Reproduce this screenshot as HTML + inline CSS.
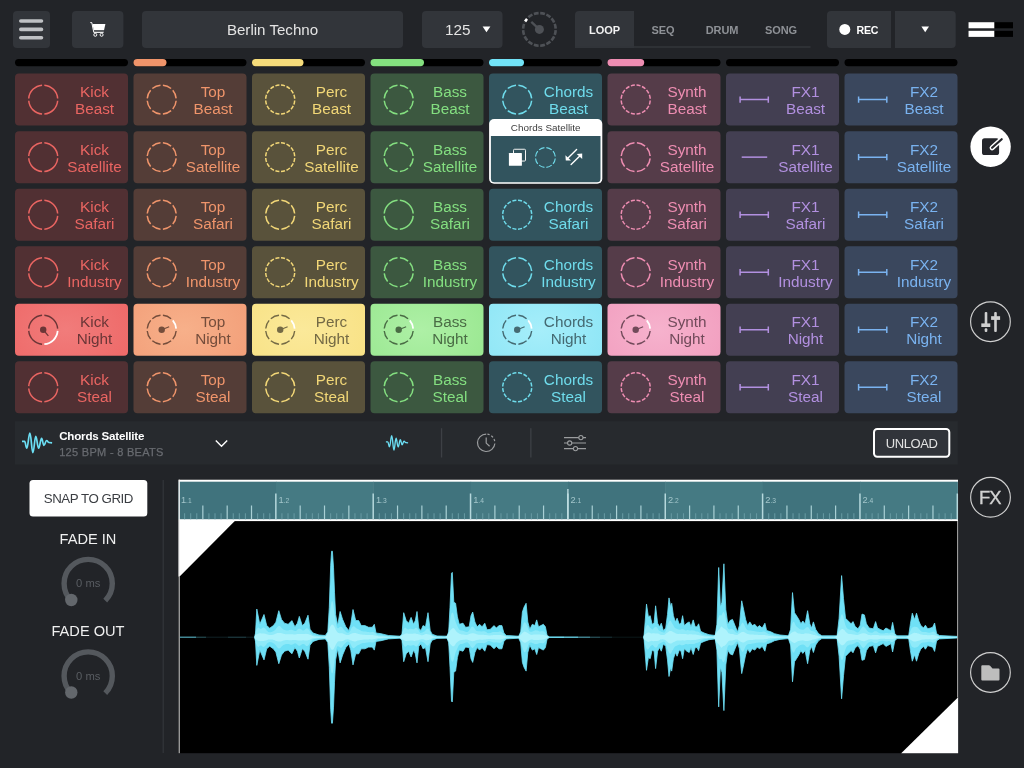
<!DOCTYPE html>
<html lang="en"><head><meta charset="utf-8"><title>Berlin Techno</title>
<style>
html,body{margin:0;padding:0}
body{width:1024px;height:768px;overflow:hidden;background:#222428;position:relative;
font-family:"Liberation Sans",sans-serif;color:#e6e6e6}
.a{position:absolute}
.cell{position:absolute;width:67px;text-align:center;font-size:15.3px;line-height:17px;white-space:nowrap}
.tab{position:absolute;top:11.8px;height:37px;line-height:37px;font-size:11px;font-weight:bold;color:#8e9196;text-align:center;letter-spacing:-.1px}
</style></head><body><div id="app" style="position:absolute;left:0;top:0;width:1024px;height:768px;will-change:transform">
<svg class="a" style="left:0;top:0" width="1024" height="768" viewBox="0 0 1024 768" font-family="Liberation Sans, sans-serif"><defs><radialGradient id="ga0" cx=".45" cy=".5" r=".62" gradientTransform="translate(.45 .5) scale(1 1.6) translate(-.45 -.5)"><stop offset="0" stop-color="#f17c7b"/><stop offset="1" stop-color="#ee6a69"/></radialGradient><radialGradient id="ga1" cx=".45" cy=".5" r=".62" gradientTransform="translate(.45 .5) scale(1 1.6) translate(-.45 -.5)"><stop offset="0" stop-color="#f7b08a"/><stop offset="1" stop-color="#f3a07a"/></radialGradient><radialGradient id="ga2" cx=".45" cy=".5" r=".62" gradientTransform="translate(.45 .5) scale(1 1.6) translate(-.45 -.5)"><stop offset="0" stop-color="#fbe99a"/><stop offset="1" stop-color="#f8e286"/></radialGradient><radialGradient id="ga3" cx=".45" cy=".5" r=".62" gradientTransform="translate(.45 .5) scale(1 1.6) translate(-.45 -.5)"><stop offset="0" stop-color="#aef0a6"/><stop offset="1" stop-color="#9be892"/></radialGradient><radialGradient id="ga4" cx=".45" cy=".5" r=".62" gradientTransform="translate(.45 .5) scale(1 1.6) translate(-.45 -.5)"><stop offset="0" stop-color="#a6eefa"/><stop offset="1" stop-color="#8fe6f6"/></radialGradient><radialGradient id="ga5" cx=".45" cy=".5" r=".62" gradientTransform="translate(.45 .5) scale(1 1.6) translate(-.45 -.5)"><stop offset="0" stop-color="#f6b2cd"/><stop offset="1" stop-color="#f2a0c0"/></radialGradient></defs>
<rect x="13" y="11" width="37" height="37" rx="4" fill="#32353a"/>
<g transform="translate(13.00 11.00)"><g stroke="#bfc1c4" stroke-width="3.6" stroke-linecap="round"><path d="M7.8 10H28.5M7.8 18.4H28.5M7.8 26.8H28.5"/></g></g>
<rect x="72" y="11" width="51.4" height="37" rx="4" fill="#32353a"/>
<g transform="translate(72.00 11.00)"><path d="M18.7 11.6H19.8L21.8 21.4H31.2" fill="none" stroke="#fff" stroke-width="1" stroke-linejoin="round" stroke-linecap="round"/><path d="M20.5 12.9H33.4L32.1 19H21.7z" fill="#fff"/><path d="M21.9 20H32" stroke="#9da0a3" stroke-width=".7"/><circle cx="23.3" cy="23.8" r="1.5" fill="none" stroke="#fff" stroke-width="0.95"/><circle cx="29.6" cy="23.8" r="1.5" fill="none" stroke="#fff" stroke-width="0.95"/></g>
<rect x="142" y="11" width="261" height="37" rx="4" fill="#32353a"/>
<rect x="422" y="11" width="80.5" height="37" rx="4" fill="#32353a"/>
<path d="M482.6 26.6H490.4L486.500 32.2z" fill="#fff"/>
<path d="M540.18 13.12A16.3 16.3 0 0 1 544.91 14.06M546.35 14.66A16.3 16.3 0 0 1 550.36 17.33M551.47 18.44A16.3 16.3 0 0 1 554.14 22.45M554.74 23.89A16.3 16.3 0 0 1 555.68 28.62M555.68 30.18A16.3 16.3 0 0 1 554.74 34.91M554.14 36.35A16.3 16.3 0 0 1 551.47 40.36M550.36 41.47A16.3 16.3 0 0 1 546.35 44.14M544.91 44.74A16.3 16.3 0 0 1 540.18 45.68M538.62 45.68A16.3 16.3 0 0 1 533.89 44.74M532.45 44.14A16.3 16.3 0 0 1 528.44 41.47M527.33 40.36A16.3 16.3 0 0 1 524.66 36.35M524.06 34.91A16.3 16.3 0 0 1 523.12 30.18M523.12 28.62A16.3 16.3 0 0 1 524.06 23.89M524.66 22.45A16.3 16.3 0 0 1 527.33 18.44M528.44 17.33A16.3 16.3 0 0 1 532.45 14.66M533.89 14.06A16.3 16.3 0 0 1 538.62 13.12" fill="none" stroke="#4e5156" stroke-width="2.6"/>
<path d="M524.75 22.25A16.3 16.3 0 0 1 527.48 18.28" fill="none" stroke="#222428" stroke-width="3.4"/>
<path d="M525.14 21.50A16.3 16.3 0 0 1 527.01 18.81" fill="none" stroke="#fff" stroke-width="2.6"/>
<circle cx="539.4" cy="29.4" r="4.5" fill="#4e5156"/>
<path d="M539.4 29.4L531.3 21.799999999999997" stroke="#4e5156" stroke-width="2.3"/>
<path d="M575 48V15q0-4 4-4H634V48z" fill="#32353a"/>
<rect x="575" y="46.200" width="235.500" height="1.600" fill="#32353a"/>
<path d="M891 11V48H831q-4 0-4-4V15q0-4 4-4z" fill="#32353a"/>
<circle cx="844.8" cy="29.4" r="5.500" fill="#fff"/>
<path d="M895 11H951.700q4 0 4 4V44q0 4-4 4H895z" fill="#32353a"/>
<path d="M921.400 26.600H929L925.200 32.200z" fill="#fff"/>
<rect x="968.500" y="22.200" width="44.500" height="6.100" fill="#000"/><rect x="968.500" y="22.200" width="25.800" height="6.100" fill="#fff"/>
<rect x="968.500" y="30.800" width="44.500" height="6.100" fill="#000"/><rect x="968.500" y="30.800" width="25.800" height="6.100" fill="#fff"/>
<rect x="15.00" y="59" width="113.0" height="7.200" rx="3.600" fill="#000"/>
<rect x="133.50" y="59" width="113.0" height="7.200" rx="3.600" fill="#000"/>
<rect x="133.50" y="59" width="33.0" height="7.200" rx="3.600" fill="#f0946a"/>
<rect x="252.00" y="59" width="113.0" height="7.200" rx="3.600" fill="#000"/>
<rect x="252.00" y="59" width="51.5" height="7.200" rx="3.600" fill="#f6dc7a"/>
<rect x="370.50" y="59" width="113.0" height="7.200" rx="3.600" fill="#000"/>
<rect x="370.50" y="59" width="53.5" height="7.200" rx="3.600" fill="#84e07f"/>
<rect x="489.00" y="59" width="113.0" height="7.200" rx="3.600" fill="#000"/>
<rect x="489.00" y="59" width="35.0" height="7.200" rx="3.600" fill="#72e3f7"/>
<rect x="607.50" y="59" width="113.0" height="7.200" rx="3.600" fill="#000"/>
<rect x="607.50" y="59" width="36.7" height="7.200" rx="3.600" fill="#ee8db2"/>
<rect x="726.00" y="59" width="113.0" height="7.200" rx="3.600" fill="#000"/>
<rect x="844.50" y="59" width="113.0" height="7.200" rx="3.600" fill="#000"/>
<rect x="15.00" y="73.60" width="113.0" height="52.0" rx="4" fill="#513033"/>
<g transform="translate(15.00 73.60)"><path d="M29.34 11.54A14.5 14.5 0 0 1 42.66 24.86M42.66 27.14A14.5 14.5 0 0 1 29.34 40.46M27.06 40.46A14.5 14.5 0 0 1 13.74 27.14M13.74 24.86A14.5 14.5 0 0 1 27.06 11.54" fill="none" stroke="#ea6562" stroke-width="1.5"/></g>
<rect x="15.00" y="131.14" width="113.0" height="52.0" rx="4" fill="#513033"/>
<g transform="translate(15.00 131.14)"><path d="M29.34 11.54A14.5 14.5 0 0 1 42.66 24.86M42.66 27.14A14.5 14.5 0 0 1 29.34 40.46M27.06 40.46A14.5 14.5 0 0 1 13.74 27.14M13.74 24.86A14.5 14.5 0 0 1 27.06 11.54" fill="none" stroke="#ea6562" stroke-width="1.5"/></g>
<rect x="15.00" y="188.68" width="113.0" height="52.0" rx="4" fill="#513033"/>
<g transform="translate(15.00 188.68)"><path d="M29.34 11.54A14.5 14.5 0 0 1 42.66 24.86M42.66 27.14A14.5 14.5 0 0 1 29.34 40.46M27.06 40.46A14.5 14.5 0 0 1 13.74 27.14M13.74 24.86A14.5 14.5 0 0 1 27.06 11.54" fill="none" stroke="#ea6562" stroke-width="1.5"/></g>
<rect x="15.00" y="246.22" width="113.0" height="52.0" rx="4" fill="#513033"/>
<g transform="translate(15.00 246.22)"><path d="M29.34 11.54A14.5 14.5 0 0 1 42.66 24.86M42.66 27.14A14.5 14.5 0 0 1 29.34 40.46M27.06 40.46A14.5 14.5 0 0 1 13.74 27.14M13.74 24.86A14.5 14.5 0 0 1 27.06 11.54" fill="none" stroke="#ea6562" stroke-width="1.5"/></g>
<rect x="15.00" y="303.76" width="113.0" height="52.0" rx="4" fill="url(#ga0)"/>
<g transform="translate(15.00 303.76)"><path d="M29.34 11.54A14.5 14.5 0 0 1 42.66 24.86M27.06 40.46A14.5 14.5 0 0 1 13.74 27.14M13.74 24.86A14.5 14.5 0 0 1 27.06 11.54" fill="none" stroke="#6b3637" stroke-width="1.4"/><path d="M42.66 27.14A14.5 14.5 0 0 1 29.34 40.46" fill="none" stroke="#fff" stroke-width="1.75"/><circle cx="28.2" cy="26.0" r="3.2" fill="#6b3637"/><path d="M28.2 26.0L33.34 32.13" stroke="#6b3637" stroke-width="1.2"/></g>
<rect x="15.00" y="361.30" width="113.0" height="52.0" rx="4" fill="#513033"/>
<g transform="translate(15.00 361.30)"><path d="M29.34 11.54A14.5 14.5 0 0 1 42.66 24.86M42.66 27.14A14.5 14.5 0 0 1 29.34 40.46M27.06 40.46A14.5 14.5 0 0 1 13.74 27.14M13.74 24.86A14.5 14.5 0 0 1 27.06 11.54" fill="none" stroke="#ea6562" stroke-width="1.5"/></g>
<rect x="133.50" y="73.60" width="113.0" height="52.0" rx="4" fill="#543d37"/>
<g transform="translate(133.50 73.60)"><path d="M29.40 11.55A14.5 14.5 0 0 1 37.57 14.93M39.27 16.63A14.5 14.5 0 0 1 42.65 24.80M42.65 27.20A14.5 14.5 0 0 1 39.27 35.37M37.57 37.07A14.5 14.5 0 0 1 29.40 40.45M27.00 40.45A14.5 14.5 0 0 1 18.83 37.07M17.13 35.37A14.5 14.5 0 0 1 13.75 27.20M13.75 24.80A14.5 14.5 0 0 1 17.13 16.63M18.83 14.93A14.5 14.5 0 0 1 27.00 11.55" fill="none" stroke="#f0956b" stroke-width="1.5"/></g>
<rect x="133.50" y="131.14" width="113.0" height="52.0" rx="4" fill="#543d37"/>
<g transform="translate(133.50 131.14)"><path d="M29.40 11.55A14.5 14.5 0 0 1 37.57 14.93M39.27 16.63A14.5 14.5 0 0 1 42.65 24.80M42.65 27.20A14.5 14.5 0 0 1 39.27 35.37M37.57 37.07A14.5 14.5 0 0 1 29.40 40.45M27.00 40.45A14.5 14.5 0 0 1 18.83 37.07M17.13 35.37A14.5 14.5 0 0 1 13.75 27.20M13.75 24.80A14.5 14.5 0 0 1 17.13 16.63M18.83 14.93A14.5 14.5 0 0 1 27.00 11.55" fill="none" stroke="#f0956b" stroke-width="1.5"/></g>
<rect x="133.50" y="188.68" width="113.0" height="52.0" rx="4" fill="#543d37"/>
<g transform="translate(133.50 188.68)"><path d="M29.40 11.55A14.5 14.5 0 0 1 37.57 14.93M39.27 16.63A14.5 14.5 0 0 1 42.65 24.80M42.65 27.20A14.5 14.5 0 0 1 39.27 35.37M37.57 37.07A14.5 14.5 0 0 1 29.40 40.45M27.00 40.45A14.5 14.5 0 0 1 18.83 37.07M17.13 35.37A14.5 14.5 0 0 1 13.75 27.20M13.75 24.80A14.5 14.5 0 0 1 17.13 16.63M18.83 14.93A14.5 14.5 0 0 1 27.00 11.55" fill="none" stroke="#f0956b" stroke-width="1.5"/></g>
<rect x="133.50" y="246.22" width="113.0" height="52.0" rx="4" fill="#543d37"/>
<g transform="translate(133.50 246.22)"><path d="M29.40 11.55A14.5 14.5 0 0 1 37.57 14.93M39.27 16.63A14.5 14.5 0 0 1 42.65 24.80M42.65 27.20A14.5 14.5 0 0 1 39.27 35.37M37.57 37.07A14.5 14.5 0 0 1 29.40 40.45M27.00 40.45A14.5 14.5 0 0 1 18.83 37.07M17.13 35.37A14.5 14.5 0 0 1 13.75 27.20M13.75 24.80A14.5 14.5 0 0 1 17.13 16.63M18.83 14.93A14.5 14.5 0 0 1 27.00 11.55" fill="none" stroke="#f0956b" stroke-width="1.5"/></g>
<rect x="133.50" y="303.76" width="113.0" height="52.0" rx="4" fill="url(#ga1)"/>
<g transform="translate(133.50 303.76)"><path d="M29.40 11.55A14.5 14.5 0 0 1 37.57 14.93M42.65 27.20A14.5 14.5 0 0 1 39.27 35.37M37.57 37.07A14.5 14.5 0 0 1 29.40 40.45M27.00 40.45A14.5 14.5 0 0 1 18.83 37.07M17.13 35.37A14.5 14.5 0 0 1 13.75 27.20M13.75 24.80A14.5 14.5 0 0 1 17.13 16.63M18.83 14.93A14.5 14.5 0 0 1 27.00 11.55" fill="none" stroke="#744d3b" stroke-width="1.4"/><path d="M39.27 16.63A14.5 14.5 0 0 1 42.65 24.80" fill="none" stroke="#fff" stroke-width="1.75"/><circle cx="28.2" cy="26.0" r="3.2" fill="#744d3b"/><path d="M28.2 26.0L35.62 23.00" stroke="#744d3b" stroke-width="1.2"/></g>
<rect x="133.50" y="361.30" width="113.0" height="52.0" rx="4" fill="#543d37"/>
<g transform="translate(133.50 361.30)"><path d="M29.40 11.55A14.5 14.5 0 0 1 37.57 14.93M39.27 16.63A14.5 14.5 0 0 1 42.65 24.80M42.65 27.20A14.5 14.5 0 0 1 39.27 35.37M37.57 37.07A14.5 14.5 0 0 1 29.40 40.45M27.00 40.45A14.5 14.5 0 0 1 18.83 37.07M17.13 35.37A14.5 14.5 0 0 1 13.75 27.20M13.75 24.80A14.5 14.5 0 0 1 17.13 16.63M18.83 14.93A14.5 14.5 0 0 1 27.00 11.55" fill="none" stroke="#f0956b" stroke-width="1.5"/></g>
<rect x="252.00" y="73.60" width="113.0" height="52.0" rx="4" fill="#59523b"/>
<g transform="translate(252.00 73.60)"><path d="M29.02 11.52A14.5 14.5 0 0 1 32.98 12.31M34.50 12.94A14.5 14.5 0 0 1 37.86 15.18M39.02 16.34A14.5 14.5 0 0 1 41.26 19.70M41.89 21.22A14.5 14.5 0 0 1 42.68 25.18M42.68 26.82A14.5 14.5 0 0 1 41.89 30.78M41.26 32.30A14.5 14.5 0 0 1 39.02 35.66M37.86 36.82A14.5 14.5 0 0 1 34.50 39.06M32.98 39.69A14.5 14.5 0 0 1 29.02 40.48M27.38 40.48A14.5 14.5 0 0 1 23.42 39.69M21.90 39.06A14.5 14.5 0 0 1 18.54 36.82M17.38 35.66A14.5 14.5 0 0 1 15.14 32.30M14.51 30.78A14.5 14.5 0 0 1 13.72 26.82M13.72 25.18A14.5 14.5 0 0 1 14.51 21.22M15.14 19.70A14.5 14.5 0 0 1 17.38 16.34M18.54 15.18A14.5 14.5 0 0 1 21.90 12.94M23.42 12.31A14.5 14.5 0 0 1 27.38 11.52" fill="none" stroke="#f2d777" stroke-width="1.5"/></g>
<rect x="252.00" y="131.14" width="113.0" height="52.0" rx="4" fill="#59523b"/>
<g transform="translate(252.00 131.14)"><path d="M29.02 11.52A14.5 14.5 0 0 1 32.98 12.31M34.50 12.94A14.5 14.5 0 0 1 37.86 15.18M39.02 16.34A14.5 14.5 0 0 1 41.26 19.70M41.89 21.22A14.5 14.5 0 0 1 42.68 25.18M42.68 26.82A14.5 14.5 0 0 1 41.89 30.78M41.26 32.30A14.5 14.5 0 0 1 39.02 35.66M37.86 36.82A14.5 14.5 0 0 1 34.50 39.06M32.98 39.69A14.5 14.5 0 0 1 29.02 40.48M27.38 40.48A14.5 14.5 0 0 1 23.42 39.69M21.90 39.06A14.5 14.5 0 0 1 18.54 36.82M17.38 35.66A14.5 14.5 0 0 1 15.14 32.30M14.51 30.78A14.5 14.5 0 0 1 13.72 26.82M13.72 25.18A14.5 14.5 0 0 1 14.51 21.22M15.14 19.70A14.5 14.5 0 0 1 17.38 16.34M18.54 15.18A14.5 14.5 0 0 1 21.90 12.94M23.42 12.31A14.5 14.5 0 0 1 27.38 11.52" fill="none" stroke="#f2d777" stroke-width="1.5"/></g>
<rect x="252.00" y="188.68" width="113.0" height="52.0" rx="4" fill="#59523b"/>
<g transform="translate(252.00 188.68)"><path d="M29.40 11.55A14.5 14.5 0 0 1 37.57 14.93M39.27 16.63A14.5 14.5 0 0 1 42.65 24.80M42.65 27.20A14.5 14.5 0 0 1 39.27 35.37M37.57 37.07A14.5 14.5 0 0 1 29.40 40.45M27.00 40.45A14.5 14.5 0 0 1 18.83 37.07M17.13 35.37A14.5 14.5 0 0 1 13.75 27.20M13.75 24.80A14.5 14.5 0 0 1 17.13 16.63M18.83 14.93A14.5 14.5 0 0 1 27.00 11.55" fill="none" stroke="#f2d777" stroke-width="1.5"/></g>
<rect x="252.00" y="246.22" width="113.0" height="52.0" rx="4" fill="#59523b"/>
<g transform="translate(252.00 246.22)"><path d="M29.02 11.52A14.5 14.5 0 0 1 32.98 12.31M34.50 12.94A14.5 14.5 0 0 1 37.86 15.18M39.02 16.34A14.5 14.5 0 0 1 41.26 19.70M41.89 21.22A14.5 14.5 0 0 1 42.68 25.18M42.68 26.82A14.5 14.5 0 0 1 41.89 30.78M41.26 32.30A14.5 14.5 0 0 1 39.02 35.66M37.86 36.82A14.5 14.5 0 0 1 34.50 39.06M32.98 39.69A14.5 14.5 0 0 1 29.02 40.48M27.38 40.48A14.5 14.5 0 0 1 23.42 39.69M21.90 39.06A14.5 14.5 0 0 1 18.54 36.82M17.38 35.66A14.5 14.5 0 0 1 15.14 32.30M14.51 30.78A14.5 14.5 0 0 1 13.72 26.82M13.72 25.18A14.5 14.5 0 0 1 14.51 21.22M15.14 19.70A14.5 14.5 0 0 1 17.38 16.34M18.54 15.18A14.5 14.5 0 0 1 21.90 12.94M23.42 12.31A14.5 14.5 0 0 1 27.38 11.52" fill="none" stroke="#f2d777" stroke-width="1.5"/></g>
<rect x="252.00" y="303.76" width="113.0" height="52.0" rx="4" fill="url(#ga2)"/>
<g transform="translate(252.00 303.76)"><path d="M29.40 11.55A14.5 14.5 0 0 1 37.57 14.93M42.65 27.20A14.5 14.5 0 0 1 39.27 35.37M37.57 37.07A14.5 14.5 0 0 1 29.40 40.45M27.00 40.45A14.5 14.5 0 0 1 18.83 37.07M17.13 35.37A14.5 14.5 0 0 1 13.75 27.20M13.75 24.80A14.5 14.5 0 0 1 17.13 16.63M18.83 14.93A14.5 14.5 0 0 1 27.00 11.55" fill="none" stroke="#746a45" stroke-width="1.4"/><path d="M39.27 16.63A14.5 14.5 0 0 1 42.65 24.80" fill="none" stroke="#fff" stroke-width="1.75"/><circle cx="28.2" cy="26.0" r="3.2" fill="#746a45"/><path d="M28.2 26.0L35.62 23.00" stroke="#746a45" stroke-width="1.2"/></g>
<rect x="252.00" y="361.30" width="113.0" height="52.0" rx="4" fill="#59523b"/>
<g transform="translate(252.00 361.30)"><path d="M29.40 11.55A14.5 14.5 0 0 1 37.57 14.93M39.27 16.63A14.5 14.5 0 0 1 42.65 24.80M42.65 27.20A14.5 14.5 0 0 1 39.27 35.37M37.57 37.07A14.5 14.5 0 0 1 29.40 40.45M27.00 40.45A14.5 14.5 0 0 1 18.83 37.07M17.13 35.37A14.5 14.5 0 0 1 13.75 27.20M13.75 24.80A14.5 14.5 0 0 1 17.13 16.63M18.83 14.93A14.5 14.5 0 0 1 27.00 11.55" fill="none" stroke="#f2d777" stroke-width="1.5"/></g>
<rect x="370.50" y="73.60" width="113.0" height="52.0" rx="4" fill="#3c5840"/>
<g transform="translate(370.50 73.60)"><path d="M29.40 11.55A14.5 14.5 0 0 1 37.57 14.93M39.27 16.63A14.5 14.5 0 0 1 42.65 24.80M42.65 27.20A14.5 14.5 0 0 1 39.27 35.37M37.57 37.07A14.5 14.5 0 0 1 29.40 40.45M27.00 40.45A14.5 14.5 0 0 1 18.83 37.07M17.13 35.37A14.5 14.5 0 0 1 13.75 27.20M13.75 24.80A14.5 14.5 0 0 1 17.13 16.63M18.83 14.93A14.5 14.5 0 0 1 27.00 11.55" fill="none" stroke="#84df80" stroke-width="1.5"/></g>
<rect x="370.50" y="131.14" width="113.0" height="52.0" rx="4" fill="#3c5840"/>
<g transform="translate(370.50 131.14)"><path d="M29.40 11.55A14.5 14.5 0 0 1 37.57 14.93M39.27 16.63A14.5 14.5 0 0 1 42.65 24.80M42.65 27.20A14.5 14.5 0 0 1 39.27 35.37M37.57 37.07A14.5 14.5 0 0 1 29.40 40.45M27.00 40.45A14.5 14.5 0 0 1 18.83 37.07M17.13 35.37A14.5 14.5 0 0 1 13.75 27.20M13.75 24.80A14.5 14.5 0 0 1 17.13 16.63M18.83 14.93A14.5 14.5 0 0 1 27.00 11.55" fill="none" stroke="#84df80" stroke-width="1.5"/></g>
<rect x="370.50" y="188.68" width="113.0" height="52.0" rx="4" fill="#3c5840"/>
<g transform="translate(370.50 188.68)"><path d="M29.34 11.54A14.5 14.5 0 0 1 42.66 24.86M42.66 27.14A14.5 14.5 0 0 1 29.34 40.46M27.06 40.46A14.5 14.5 0 0 1 13.74 27.14M13.74 24.86A14.5 14.5 0 0 1 27.06 11.54" fill="none" stroke="#84df80" stroke-width="1.5"/></g>
<rect x="370.50" y="246.22" width="113.0" height="52.0" rx="4" fill="#3c5840"/>
<g transform="translate(370.50 246.22)"><path d="M29.40 11.55A14.5 14.5 0 0 1 37.57 14.93M39.27 16.63A14.5 14.5 0 0 1 42.65 24.80M42.65 27.20A14.5 14.5 0 0 1 39.27 35.37M37.57 37.07A14.5 14.5 0 0 1 29.40 40.45M27.00 40.45A14.5 14.5 0 0 1 18.83 37.07M17.13 35.37A14.5 14.5 0 0 1 13.75 27.20M13.75 24.80A14.5 14.5 0 0 1 17.13 16.63M18.83 14.93A14.5 14.5 0 0 1 27.00 11.55" fill="none" stroke="#84df80" stroke-width="1.5"/></g>
<rect x="370.50" y="303.76" width="113.0" height="52.0" rx="4" fill="url(#ga3)"/>
<g transform="translate(370.50 303.76)"><path d="M29.40 11.55A14.5 14.5 0 0 1 37.57 14.93M42.65 27.20A14.5 14.5 0 0 1 39.27 35.37M37.57 37.07A14.5 14.5 0 0 1 29.40 40.45M27.00 40.45A14.5 14.5 0 0 1 18.83 37.07M17.13 35.37A14.5 14.5 0 0 1 13.75 27.20M13.75 24.80A14.5 14.5 0 0 1 17.13 16.63M18.83 14.93A14.5 14.5 0 0 1 27.00 11.55" fill="none" stroke="#4a6c45" stroke-width="1.4"/><path d="M39.27 16.63A14.5 14.5 0 0 1 42.65 24.80" fill="none" stroke="#fff" stroke-width="1.75"/><circle cx="28.2" cy="26.0" r="3.2" fill="#4a6c45"/><path d="M28.2 26.0L35.62 23.00" stroke="#4a6c45" stroke-width="1.2"/></g>
<rect x="370.50" y="361.30" width="113.0" height="52.0" rx="4" fill="#3c5840"/>
<g transform="translate(370.50 361.30)"><path d="M29.40 11.55A14.5 14.5 0 0 1 37.57 14.93M39.27 16.63A14.5 14.5 0 0 1 42.65 24.80M42.65 27.20A14.5 14.5 0 0 1 39.27 35.37M37.57 37.07A14.5 14.5 0 0 1 29.40 40.45M27.00 40.45A14.5 14.5 0 0 1 18.83 37.07M17.13 35.37A14.5 14.5 0 0 1 13.75 27.20M13.75 24.80A14.5 14.5 0 0 1 17.13 16.63M18.83 14.93A14.5 14.5 0 0 1 27.00 11.55" fill="none" stroke="#84df80" stroke-width="1.5"/></g>
<rect x="489.00" y="73.60" width="113.0" height="52.0" rx="4" fill="#32545e"/>
<g transform="translate(489.00 73.60)"><path d="M29.40 11.55A14.5 14.5 0 0 1 37.57 14.93M39.27 16.63A14.5 14.5 0 0 1 42.65 24.80M42.65 27.20A14.5 14.5 0 0 1 39.27 35.37M37.57 37.07A14.5 14.5 0 0 1 29.40 40.45M27.00 40.45A14.5 14.5 0 0 1 18.83 37.07M17.13 35.37A14.5 14.5 0 0 1 13.75 27.20M13.75 24.80A14.5 14.5 0 0 1 17.13 16.63M18.83 14.93A14.5 14.5 0 0 1 27.00 11.55" fill="none" stroke="#6fdcec" stroke-width="1.5"/></g>
<rect x="489.00" y="188.68" width="113.0" height="52.0" rx="4" fill="#32545e"/>
<g transform="translate(489.00 188.68)"><path d="M29.02 11.52A14.5 14.5 0 0 1 32.98 12.31M34.50 12.94A14.5 14.5 0 0 1 37.86 15.18M39.02 16.34A14.5 14.5 0 0 1 41.26 19.70M41.89 21.22A14.5 14.5 0 0 1 42.68 25.18M42.68 26.82A14.5 14.5 0 0 1 41.89 30.78M41.26 32.30A14.5 14.5 0 0 1 39.02 35.66M37.86 36.82A14.5 14.5 0 0 1 34.50 39.06M32.98 39.69A14.5 14.5 0 0 1 29.02 40.48M27.38 40.48A14.5 14.5 0 0 1 23.42 39.69M21.90 39.06A14.5 14.5 0 0 1 18.54 36.82M17.38 35.66A14.5 14.5 0 0 1 15.14 32.30M14.51 30.78A14.5 14.5 0 0 1 13.72 26.82M13.72 25.18A14.5 14.5 0 0 1 14.51 21.22M15.14 19.70A14.5 14.5 0 0 1 17.38 16.34M18.54 15.18A14.5 14.5 0 0 1 21.90 12.94M23.42 12.31A14.5 14.5 0 0 1 27.38 11.52" fill="none" stroke="#6fdcec" stroke-width="1.5"/></g>
<rect x="489.00" y="246.22" width="113.0" height="52.0" rx="4" fill="#32545e"/>
<g transform="translate(489.00 246.22)"><path d="M29.40 11.55A14.5 14.5 0 0 1 37.57 14.93M39.27 16.63A14.5 14.5 0 0 1 42.65 24.80M42.65 27.20A14.5 14.5 0 0 1 39.27 35.37M37.57 37.07A14.5 14.5 0 0 1 29.40 40.45M27.00 40.45A14.5 14.5 0 0 1 18.83 37.07M17.13 35.37A14.5 14.5 0 0 1 13.75 27.20M13.75 24.80A14.5 14.5 0 0 1 17.13 16.63M18.83 14.93A14.5 14.5 0 0 1 27.00 11.55" fill="none" stroke="#6fdcec" stroke-width="1.5"/></g>
<rect x="489.00" y="303.76" width="113.0" height="52.0" rx="4" fill="url(#ga4)"/>
<g transform="translate(489.00 303.76)"><path d="M29.40 11.55A14.5 14.5 0 0 1 37.57 14.93M42.65 27.20A14.5 14.5 0 0 1 39.27 35.37M37.57 37.07A14.5 14.5 0 0 1 29.40 40.45M27.00 40.45A14.5 14.5 0 0 1 18.83 37.07M17.13 35.37A14.5 14.5 0 0 1 13.75 27.20M13.75 24.80A14.5 14.5 0 0 1 17.13 16.63M18.83 14.93A14.5 14.5 0 0 1 27.00 11.55" fill="none" stroke="#456a72" stroke-width="1.4"/><path d="M39.27 16.63A14.5 14.5 0 0 1 42.65 24.80" fill="none" stroke="#fff" stroke-width="1.75"/><circle cx="28.2" cy="26.0" r="3.2" fill="#456a72"/><path d="M28.2 26.0L35.62 23.00" stroke="#456a72" stroke-width="1.2"/></g>
<rect x="489.00" y="361.30" width="113.0" height="52.0" rx="4" fill="#32545e"/>
<g transform="translate(489.00 361.30)"><path d="M29.02 11.52A14.5 14.5 0 0 1 32.98 12.31M34.50 12.94A14.5 14.5 0 0 1 37.86 15.18M39.02 16.34A14.5 14.5 0 0 1 41.26 19.70M41.89 21.22A14.5 14.5 0 0 1 42.68 25.18M42.68 26.82A14.5 14.5 0 0 1 41.89 30.78M41.26 32.30A14.5 14.5 0 0 1 39.02 35.66M37.86 36.82A14.5 14.5 0 0 1 34.50 39.06M32.98 39.69A14.5 14.5 0 0 1 29.02 40.48M27.38 40.48A14.5 14.5 0 0 1 23.42 39.69M21.90 39.06A14.5 14.5 0 0 1 18.54 36.82M17.38 35.66A14.5 14.5 0 0 1 15.14 32.30M14.51 30.78A14.5 14.5 0 0 1 13.72 26.82M13.72 25.18A14.5 14.5 0 0 1 14.51 21.22M15.14 19.70A14.5 14.5 0 0 1 17.38 16.34M18.54 15.18A14.5 14.5 0 0 1 21.90 12.94M23.42 12.31A14.5 14.5 0 0 1 27.38 11.52" fill="none" stroke="#6fdcec" stroke-width="1.5"/></g>
<rect x="607.50" y="73.60" width="113.0" height="52.0" rx="4" fill="#553c49"/>
<g transform="translate(607.50 73.60)"><path d="M29.02 11.52A14.5 14.5 0 0 1 32.98 12.31M34.50 12.94A14.5 14.5 0 0 1 37.86 15.18M39.02 16.34A14.5 14.5 0 0 1 41.26 19.70M41.89 21.22A14.5 14.5 0 0 1 42.68 25.18M42.68 26.82A14.5 14.5 0 0 1 41.89 30.78M41.26 32.30A14.5 14.5 0 0 1 39.02 35.66M37.86 36.82A14.5 14.5 0 0 1 34.50 39.06M32.98 39.69A14.5 14.5 0 0 1 29.02 40.48M27.38 40.48A14.5 14.5 0 0 1 23.42 39.69M21.90 39.06A14.5 14.5 0 0 1 18.54 36.82M17.38 35.66A14.5 14.5 0 0 1 15.14 32.30M14.51 30.78A14.5 14.5 0 0 1 13.72 26.82M13.72 25.18A14.5 14.5 0 0 1 14.51 21.22M15.14 19.70A14.5 14.5 0 0 1 17.38 16.34M18.54 15.18A14.5 14.5 0 0 1 21.90 12.94M23.42 12.31A14.5 14.5 0 0 1 27.38 11.52" fill="none" stroke="#ee8db2" stroke-width="1.5"/></g>
<rect x="607.50" y="131.14" width="113.0" height="52.0" rx="4" fill="#553c49"/>
<g transform="translate(607.50 131.14)"><path d="M29.40 11.55A14.5 14.5 0 0 1 37.57 14.93M39.27 16.63A14.5 14.5 0 0 1 42.65 24.80M42.65 27.20A14.5 14.5 0 0 1 39.27 35.37M37.57 37.07A14.5 14.5 0 0 1 29.40 40.45M27.00 40.45A14.5 14.5 0 0 1 18.83 37.07M17.13 35.37A14.5 14.5 0 0 1 13.75 27.20M13.75 24.80A14.5 14.5 0 0 1 17.13 16.63M18.83 14.93A14.5 14.5 0 0 1 27.00 11.55" fill="none" stroke="#ee8db2" stroke-width="1.5"/></g>
<rect x="607.50" y="188.68" width="113.0" height="52.0" rx="4" fill="#553c49"/>
<g transform="translate(607.50 188.68)"><path d="M29.02 11.52A14.5 14.5 0 0 1 32.98 12.31M34.50 12.94A14.5 14.5 0 0 1 37.86 15.18M39.02 16.34A14.5 14.5 0 0 1 41.26 19.70M41.89 21.22A14.5 14.5 0 0 1 42.68 25.18M42.68 26.82A14.5 14.5 0 0 1 41.89 30.78M41.26 32.30A14.5 14.5 0 0 1 39.02 35.66M37.86 36.82A14.5 14.5 0 0 1 34.50 39.06M32.98 39.69A14.5 14.5 0 0 1 29.02 40.48M27.38 40.48A14.5 14.5 0 0 1 23.42 39.69M21.90 39.06A14.5 14.5 0 0 1 18.54 36.82M17.38 35.66A14.5 14.5 0 0 1 15.14 32.30M14.51 30.78A14.5 14.5 0 0 1 13.72 26.82M13.72 25.18A14.5 14.5 0 0 1 14.51 21.22M15.14 19.70A14.5 14.5 0 0 1 17.38 16.34M18.54 15.18A14.5 14.5 0 0 1 21.90 12.94M23.42 12.31A14.5 14.5 0 0 1 27.38 11.52" fill="none" stroke="#ee8db2" stroke-width="1.5"/></g>
<rect x="607.50" y="246.22" width="113.0" height="52.0" rx="4" fill="#553c49"/>
<g transform="translate(607.50 246.22)"><path d="M29.40 11.55A14.5 14.5 0 0 1 37.57 14.93M39.27 16.63A14.5 14.5 0 0 1 42.65 24.80M42.65 27.20A14.5 14.5 0 0 1 39.27 35.37M37.57 37.07A14.5 14.5 0 0 1 29.40 40.45M27.00 40.45A14.5 14.5 0 0 1 18.83 37.07M17.13 35.37A14.5 14.5 0 0 1 13.75 27.20M13.75 24.80A14.5 14.5 0 0 1 17.13 16.63M18.83 14.93A14.5 14.5 0 0 1 27.00 11.55" fill="none" stroke="#ee8db2" stroke-width="1.5"/></g>
<rect x="607.50" y="303.76" width="113.0" height="52.0" rx="4" fill="url(#ga5)"/>
<g transform="translate(607.50 303.76)"><path d="M29.40 11.55A14.5 14.5 0 0 1 37.57 14.93M42.65 27.20A14.5 14.5 0 0 1 39.27 35.37M37.57 37.07A14.5 14.5 0 0 1 29.40 40.45M27.00 40.45A14.5 14.5 0 0 1 18.83 37.07M17.13 35.37A14.5 14.5 0 0 1 13.75 27.20M13.75 24.80A14.5 14.5 0 0 1 17.13 16.63M18.83 14.93A14.5 14.5 0 0 1 27.00 11.55" fill="none" stroke="#714a5a" stroke-width="1.4"/><path d="M39.27 16.63A14.5 14.5 0 0 1 42.65 24.80" fill="none" stroke="#fff" stroke-width="1.75"/><circle cx="28.2" cy="26.0" r="3.2" fill="#714a5a"/><path d="M28.2 26.0L35.62 23.00" stroke="#714a5a" stroke-width="1.2"/></g>
<rect x="607.50" y="361.30" width="113.0" height="52.0" rx="4" fill="#553c49"/>
<g transform="translate(607.50 361.30)"><path d="M29.02 11.52A14.5 14.5 0 0 1 32.98 12.31M34.50 12.94A14.5 14.5 0 0 1 37.86 15.18M39.02 16.34A14.5 14.5 0 0 1 41.26 19.70M41.89 21.22A14.5 14.5 0 0 1 42.68 25.18M42.68 26.82A14.5 14.5 0 0 1 41.89 30.78M41.26 32.30A14.5 14.5 0 0 1 39.02 35.66M37.86 36.82A14.5 14.5 0 0 1 34.50 39.06M32.98 39.69A14.5 14.5 0 0 1 29.02 40.48M27.38 40.48A14.5 14.5 0 0 1 23.42 39.69M21.90 39.06A14.5 14.5 0 0 1 18.54 36.82M17.38 35.66A14.5 14.5 0 0 1 15.14 32.30M14.51 30.78A14.5 14.5 0 0 1 13.72 26.82M13.72 25.18A14.5 14.5 0 0 1 14.51 21.22M15.14 19.70A14.5 14.5 0 0 1 17.38 16.34M18.54 15.18A14.5 14.5 0 0 1 21.90 12.94M23.42 12.31A14.5 14.5 0 0 1 27.38 11.52" fill="none" stroke="#ee8db2" stroke-width="1.5"/></g>
<rect x="726.00" y="73.60" width="113.0" height="52.0" rx="4" fill="#433f52"/>
<g transform="translate(726.00 73.60)"><path d="M13.6 26.0H42.8M14.1 22.8V29.2M42.3 22.8V29.2" stroke="#b290e0" stroke-width="1.5" fill="none"/></g>
<rect x="726.00" y="131.14" width="113.0" height="52.0" rx="4" fill="#433f52"/>
<g transform="translate(726.00 131.14)"><path d="M15.7 26.0H41.2" stroke="#b290e0" stroke-width="1.5"/></g>
<rect x="726.00" y="188.68" width="113.0" height="52.0" rx="4" fill="#433f52"/>
<g transform="translate(726.00 188.68)"><path d="M13.6 26.0H42.8M14.1 22.8V29.2M42.3 22.8V29.2" stroke="#b290e0" stroke-width="1.5" fill="none"/></g>
<rect x="726.00" y="246.22" width="113.0" height="52.0" rx="4" fill="#433f52"/>
<g transform="translate(726.00 246.22)"><path d="M13.6 26.0H42.8M14.1 22.8V29.2M42.3 22.8V29.2" stroke="#b290e0" stroke-width="1.5" fill="none"/></g>
<rect x="726.00" y="303.76" width="113.0" height="52.0" rx="4" fill="#433f52"/>
<g transform="translate(726.00 303.76)"><path d="M13.6 26.0H42.8M14.1 22.8V29.2M42.3 22.8V29.2" stroke="#b290e0" stroke-width="1.5" fill="none"/></g>
<rect x="726.00" y="361.30" width="113.0" height="52.0" rx="4" fill="#433f52"/>
<g transform="translate(726.00 361.30)"><path d="M13.6 26.0H42.8M14.1 22.8V29.2M42.3 22.8V29.2" stroke="#b290e0" stroke-width="1.5" fill="none"/></g>
<rect x="844.50" y="73.60" width="113.0" height="52.0" rx="4" fill="#3a475d"/>
<g transform="translate(844.50 73.60)"><path d="M13.6 26.0H42.8M14.1 22.8V29.2M42.3 22.8V29.2" stroke="#7ab3f0" stroke-width="1.5" fill="none"/></g>
<rect x="844.50" y="131.14" width="113.0" height="52.0" rx="4" fill="#3a475d"/>
<g transform="translate(844.50 131.14)"><path d="M13.6 26.0H42.8M14.1 22.8V29.2M42.3 22.8V29.2" stroke="#7ab3f0" stroke-width="1.5" fill="none"/></g>
<rect x="844.50" y="188.68" width="113.0" height="52.0" rx="4" fill="#3a475d"/>
<g transform="translate(844.50 188.68)"><path d="M13.6 26.0H42.8M14.1 22.8V29.2M42.3 22.8V29.2" stroke="#7ab3f0" stroke-width="1.5" fill="none"/></g>
<rect x="844.50" y="246.22" width="113.0" height="52.0" rx="4" fill="#3a475d"/>
<g transform="translate(844.50 246.22)"><path d="M13.6 26.0H42.8M14.1 22.8V29.2M42.3 22.8V29.2" stroke="#7ab3f0" stroke-width="1.5" fill="none"/></g>
<rect x="844.50" y="303.76" width="113.0" height="52.0" rx="4" fill="#3a475d"/>
<g transform="translate(844.50 303.76)"><path d="M13.6 26.0H42.8M14.1 22.8V29.2M42.3 22.8V29.2" stroke="#7ab3f0" stroke-width="1.5" fill="none"/></g>
<rect x="844.50" y="361.30" width="113.0" height="52.0" rx="4" fill="#3a475d"/>
<g transform="translate(844.50 361.30)"><path d="M13.6 26.0H42.8M14.1 22.8V29.2M42.3 22.8V29.2" stroke="#7ab3f0" stroke-width="1.5" fill="none"/></g>
<rect x="489.1" y="119.0" width="113.200" height="64.800" rx="5" fill="#fff"/>
<path d="M490.90000000000003 136.0h109.600v42.700q0 3.500-3.500 3.500h-102.600q-3.500 0-3.500-3.500z" fill="#32545e"/>
<g transform="translate(489.10 136.00)"><rect x="24.4" y="13.25" width="12" height="11.8" rx="1" fill="none" stroke="#f4f4f4" stroke-width="1"/><rect x="19.8" y="17" width="13" height="12.8" rx=".6" fill="#fff"/><path d="M57.25 11.65A9.9 9.9 0 0 1 62.60 13.86M63.94 15.20A9.9 9.9 0 0 1 66.15 20.55M66.15 22.45A9.9 9.9 0 0 1 63.94 27.80M62.60 29.14A9.9 9.9 0 0 1 57.25 31.35M55.35 31.35A9.9 9.9 0 0 1 50.00 29.14M48.66 27.80A9.9 9.9 0 0 1 46.45 22.45M46.45 20.55A9.9 9.9 0 0 1 48.66 15.20M50.00 13.86A9.9 9.9 0 0 1 55.35 11.65" fill="none" stroke="#6fd9e8" stroke-width="1.2"/><g stroke="#fff" stroke-width="1.35" fill="none" stroke-linecap="round"><path d="M87.5 13.4L78.4 22.4M82.0 28.6L91.2 19.5"/></g><path d="M76.3 19.2L76.7 24.5L81.9 24.5zM87.6 18.1L93.1 17.6L93.1 23.1z" fill="#fff"/></g>
<circle cx="990.6" cy="146.7" r="20.200" fill="#fff"/>
<g transform="translate(970.00 126.00)"><rect x="12" y="12.2" width="17.1" height="16.8" rx="2.6" fill="#24262b"/><path d="M22.1 21.8L31.2 13.6" stroke="#fff" stroke-width="5" stroke-linecap="round"/><path d="M22.1 21.8L31.7 13.2" stroke="#24262b" stroke-width="2.2" stroke-linecap="round"/></g>
<circle cx="990.45" cy="321.7" r="19.85" fill="none" stroke="#cfcfcf" stroke-width="1.15"/>
<g transform="translate(970.10 301.00)"><g fill="#cfcfcf"><rect x="14.6" y="11.1" width="2.6" height="14.9" rx="1"/><rect x="14.6" y="27.3" width="2.6" height="3.7" rx="1"/><rect x="11.2" y="22.4" width="9" height="3.6"/><rect x="24.1" y="11.1" width="2.6" height="19.9" rx="1"/><rect x="21" y="15.2" width="9" height="3.7"/></g></g>
<circle cx="990.5" cy="497.3" r="19.85" fill="none" stroke="#cfcfcf" stroke-width="1.15"/>
<circle cx="990.45" cy="672.45" r="19.85" fill="none" stroke="#cfcfcf" stroke-width="1.15"/>
<g transform="translate(970.10 652.10)"><path d="M11.2 14.2q0-1 1-1h6.6q0.700 0 1.200.5l2.400 2.600h6q1 0 1 1v10.200q0 1-1 1h-16.200q-1 0-1-1z" fill="#bdbdbd"/></g>
<rect x="15" y="421.200" width="942.800" height="43.400" fill="#272a2e"/>
<g transform="translate(22.00 442.80)"><path d="M0.00 -1.40L2.60 -1.40C3.52 -1.40 3.88 5.40 4.80 5.40C6.10 5.40 6.60 -9.80 7.90 -9.80C9.16 -9.80 9.64 9.80 10.90 9.80C12.12 9.80 12.58 -6.40 13.80 -6.40C14.98 -6.40 15.42 5.40 16.60 5.40C17.86 5.40 18.34 -4.40 19.60 -4.40C20.57 -4.40 20.93 2.50 21.90 2.50C23.03 2.50 23.47 -2.30 24.60 -2.30C25.57 -2.30 25.93 -0.30 26.90 -0.30L30.10 0.00" fill="none" stroke="#6cdff4" stroke-width="1.7" stroke-linejoin="round"/></g>
<path d="M215.800 440.400L221.500 446.200L227.200 440.400" fill="none" stroke="#fff" stroke-width="1.400"/>
<g transform="translate(385.90 442.90)"><path d="M0.00 -1.03L1.92 -1.03C2.60 -1.03 2.86 3.98 3.54 3.98C4.50 3.98 4.87 -7.23 5.83 -7.23C6.76 -7.23 7.11 7.23 8.04 7.23C8.94 7.23 9.28 -4.72 10.18 -4.72C11.04 -4.72 11.38 3.98 12.24 3.98C13.17 3.98 13.53 -3.25 14.46 -3.25C15.17 -3.25 15.44 1.84 16.15 1.84C16.99 1.84 17.31 -1.70 18.14 -1.70C18.85 -1.70 19.13 -0.22 19.84 -0.22L22.20 0.00" fill="none" stroke="#6cdff4" stroke-width="1.35" stroke-linejoin="round"/></g>
<rect x="440.900" y="428.200" width="1.300" height="29.300" fill="#3d4045"/>
<rect x="530.200" y="428.200" width="1.300" height="29.300" fill="#3d4045"/>
<g transform="translate(474.20 431.10)"><path d="M20.67 12.46A8.7 8.7 0 1 1 12.00 3.00" fill="none" stroke="#9b9d9f" stroke-width="1.2"/><path d="M13.21 3.08A8.7 8.7 0 0 1 20.69 11.40" fill="none" stroke="#9b9d9f" stroke-width="1.2" stroke-dasharray="2.300 1.900"/><path d="M12 6.300V12L15.400 15.200" fill="none" stroke="#9b9d9f" stroke-width="1.2"/></g>
<g transform="translate(562.00 431.00)"><g stroke="#9b9d9f" stroke-width="1.1" fill="#272a2e"><path d="M2 6.600H24M2 12H24M2 17.600H24"/><circle cx="18.900" cy="6.600" r="2.100"/><circle cx="7.700" cy="12" r="2.100"/><circle cx="13.500" cy="17.600" r="2.100"/></g></g>
<rect x="874" y="429" width="75.300" height="27.800" rx="3.200" fill="#31343a" stroke="#fff" stroke-width="2"/>
<rect x="29.500" y="480" width="117.800" height="36.500" rx="3.500" fill="#fff"/>
<rect x="162.600" y="480" width="1.200" height="273" fill="#34363b"/>
<g transform="translate(58.00 553.50)"><path d="M13.16 47.04A24.1 24.1 0 1 1 47.24 47.04" fill="none" stroke="#54585d" stroke-width="5.4"/><circle cx="13.300" cy="46.500" r="6.200" fill="#63676c"/></g>
<g transform="translate(58.00 646.00)"><path d="M13.16 47.04A24.1 24.1 0 1 1 47.24 47.04" fill="none" stroke="#54585d" stroke-width="5.4"/><circle cx="13.300" cy="46.500" r="6.200" fill="#63676c"/></g>
<rect x="178.6" y="479.7" width="779.4" height="273.5" fill="#000"/><rect x="178.6" y="479.7" width="779.4" height="41.400" fill="#fff"/><rect x="178.60" y="481.7" width="97.85" height="37.500" fill="#40737d"/><rect x="275.95" y="481.7" width="97.85" height="37.500" fill="#457a83"/><rect x="373.30" y="481.7" width="97.85" height="37.500" fill="#40737d"/><rect x="470.65" y="481.7" width="97.85" height="37.500" fill="#457a83"/><rect x="568.00" y="481.7" width="97.85" height="37.500" fill="#40737d"/><rect x="665.35" y="481.7" width="97.85" height="37.500" fill="#457a83"/><rect x="762.70" y="481.7" width="97.85" height="37.500" fill="#40737d"/><rect x="860.05" y="481.7" width="97.85" height="37.500" fill="#457a83"/><path d="M184.58 513.200V519.300M190.67 513.200V519.300M196.75 513.200V519.300M208.92 513.200V519.300M215.01 513.200V519.300M221.09 513.200V519.300M233.26 513.200V519.300M239.34 513.200V519.300M245.43 513.200V519.300M257.60 513.200V519.300M263.68 513.200V519.300M269.77 513.200V519.300M281.93 513.200V519.300M288.02 513.200V519.300M294.10 513.200V519.300M306.27 513.200V519.300M312.36 513.200V519.300M318.44 513.200V519.300M330.61 513.200V519.300M336.69 513.200V519.300M342.78 513.200V519.300M354.95 513.200V519.300M361.03 513.200V519.300M367.12 513.200V519.300M379.28 513.200V519.300M385.37 513.200V519.300M391.45 513.200V519.300M403.62 513.200V519.300M409.71 513.200V519.300M415.79 513.200V519.300M427.96 513.200V519.300M434.04 513.200V519.300M440.13 513.200V519.300M452.30 513.200V519.300M458.38 513.200V519.300M464.47 513.200V519.300M476.63 513.200V519.300M482.72 513.200V519.300M488.80 513.200V519.300M500.97 513.200V519.300M507.06 513.200V519.300M513.14 513.200V519.300M525.31 513.200V519.300M531.39 513.200V519.300M537.48 513.200V519.300M549.65 513.200V519.300M555.73 513.200V519.300M561.82 513.200V519.300M573.98 513.200V519.300M580.07 513.200V519.300M586.15 513.200V519.300M598.32 513.200V519.300M604.41 513.200V519.300M610.49 513.200V519.300M622.66 513.200V519.300M628.74 513.200V519.300M634.83 513.200V519.300M647.00 513.200V519.300M653.08 513.200V519.300M659.17 513.200V519.300M671.33 513.200V519.300M677.42 513.200V519.300M683.50 513.200V519.300M695.67 513.200V519.300M701.76 513.200V519.300M707.84 513.200V519.300M720.01 513.200V519.300M726.09 513.200V519.300M732.18 513.200V519.300M744.35 513.200V519.300M750.43 513.200V519.300M756.52 513.200V519.300M768.68 513.200V519.300M774.77 513.200V519.300M780.85 513.200V519.300M793.02 513.200V519.300M799.11 513.200V519.300M805.19 513.200V519.300M817.36 513.200V519.300M823.44 513.200V519.300M829.53 513.200V519.300M841.70 513.200V519.300M847.78 513.200V519.300M853.87 513.200V519.300M866.03 513.200V519.300M872.12 513.200V519.300M878.20 513.200V519.300M890.37 513.200V519.300M896.46 513.200V519.300M902.54 513.200V519.300M914.71 513.200V519.300M920.79 513.200V519.300M926.88 513.200V519.300M939.05 513.200V519.300M945.13 513.200V519.300M951.22 513.200V519.300" stroke="#6497a0" stroke-width="1.1"/><path d="M202.84 505.600V519.300M227.18 505.600V519.300M251.51 505.600V519.300M300.19 505.600V519.300M324.52 505.600V519.300M348.86 505.600V519.300M397.54 505.600V519.300M421.88 505.600V519.300M446.21 505.600V519.300M494.89 505.600V519.300M519.22 505.600V519.300M543.56 505.600V519.300M592.24 505.600V519.300M616.58 505.600V519.300M640.91 505.600V519.300M689.59 505.600V519.300M713.92 505.600V519.300M738.26 505.600V519.300M786.94 505.600V519.300M811.27 505.600V519.300M835.61 505.600V519.300M884.29 505.600V519.300M908.62 505.600V519.300M932.96 505.600V519.300" stroke="#a9d0d5" stroke-width="1.2"/><path d="M275.85 493.400V519.300M373.20 493.400V519.300M470.55 493.400V519.300M567.90 493.400V519.300M665.25 493.400V519.300M762.60 493.400V519.300M859.95 493.400V519.300M957.30 493.400V519.300" stroke="#b5d8dc" stroke-width="1.5"/><path d="M567.90 489V519.300" stroke="#c4e2e6" stroke-width="1.3"/><text x="180.9" y="503.200" font-size="9.3" fill="#a3c6cb">1<tspan font-size="6.7">.1</tspan></text><text x="278.6" y="503.200" font-size="9.3" fill="#a3c6cb">1<tspan font-size="6.7">.2</tspan></text><text x="375.9" y="503.200" font-size="9.3" fill="#a3c6cb">1<tspan font-size="6.7">.3</tspan></text><text x="473.2" y="503.200" font-size="9.3" fill="#a3c6cb">1<tspan font-size="6.7">.4</tspan></text><text x="570.6" y="503.200" font-size="9.3" fill="#a3c6cb">2<tspan font-size="6.7">.1</tspan></text><text x="667.9" y="503.200" font-size="9.3" fill="#a3c6cb">2<tspan font-size="6.7">.2</tspan></text><text x="765.3" y="503.200" font-size="9.3" fill="#a3c6cb">2<tspan font-size="6.7">.3</tspan></text><text x="862.6" y="503.200" font-size="9.3" fill="#a3c6cb">2<tspan font-size="6.7">.4</tspan></text><path d="M178.6 521H234.800L179.9 576.300H178.6z" fill="#fff"/><path d="M958.1 697.300V753.2H901.200z" fill="#fff"/><rect x="178.6" y="479.7" width="1.3" height="97" fill="#f2f2f2"/><rect x="178.6" y="576" width="1.3" height="177.2" fill="#a8a8a8"/><rect x="957.0" y="521" width="1.100" height="176.5" fill="#9a9a9a"/><rect x="179.9" y="636.60" width="16.1" height="1.2" fill="#6fe0f6" opacity="0.75"/><rect x="196" y="636.70" width="10.0" height="1" fill="#6fe0f6" opacity="0.4"/><rect x="206" y="636.70" width="22.0" height="1" fill="#6fe0f6" opacity="0.15"/><rect x="228" y="636.70" width="18.0" height="1" fill="#6fe0f6" opacity="0.32"/><rect x="246" y="636.70" width="8.6" height="1" fill="#6fe0f6" opacity="0.15"/><rect x="549" y="636.45" width="15.0" height="1.5" fill="#6fe0f6" opacity="1"/><rect x="564" y="636.50" width="14.0" height="1.4" fill="#6fe0f6" opacity="0.9"/><rect x="578" y="636.60" width="12.0" height="1.2" fill="#6fe0f6" opacity="0.7"/><rect x="590" y="636.70" width="10.0" height="1" fill="#6fe0f6" opacity="0.45"/><rect x="600" y="636.70" width="12.0" height="1" fill="#6fe0f6" opacity="0.25"/><rect x="612" y="636.70" width="31.6" height="1" fill="#6fe0f6" opacity="0.1"/><path d="M254.6 636.9L255.5 633.2L256.8 609.0L259.8 624.3L264.0 614.5L266.7 625.6L269.7 628.2L273.4 625.6L275.9 622.2L278.8 610.7L281.5 619.4L284.5 623.2L288.2 624.3L291.9 620.6L294.9 626.8L297.4 623.2L299.3 616.4L302.3 625.6L304.8 623.2L308.0 615.2L310.0 629.2L313.0 633.0L319.0 635.0L325.3 635.5L327.8 631.8L329.3 607.2L330.7 565.2L331.6 551.2L332.4 551.2L333.5 567.2L334.5 592.2L335.6 614.5L337.7 625.6L340.1 611.5L342.6 619.4L345.8 626.8L348.8 630.5L350.8 624.3L353.0 609.5L355.7 620.6L358.7 620.6L361.2 625.6L364.9 625.6L368.6 627.3L372.3 627.3L374.3 624.3L376.0 633.0L381.0 633.7L388.4 635.5L400.0 636.2L402.0 634.2L403.7 612.7L406.2 620.6L408.7 623.2L411.1 617.4L413.6 624.3L415.3 620.6L417.0 611.5L418.8 628.2L421.0 630.5L423.0 625.6L425.5 626.8L428.0 612.7L430.2 630.5L432.1 634.2L437.0 636.0L447.0 636.2L448.7 631.8L450.0 607.2L451.5 573.2L452.3 572.4L453.8 602.2L455.6 603.3L457.4 616.9L459.3 624.3L463.0 623.2L465.5 627.3L469.2 626.8L471.0 615.7L472.7 612.0L474.9 621.9L477.1 626.8L479.6 624.3L482.1 626.8L484.8 623.2L487.0 629.8L490.3 629.3L494.0 625.6L496.4 628.1L498.9 625.6L501.9 625.6L503.9 633.0L506.3 635.5L518.7 636.2L520.7 631.8L522.4 612.0L524.1 607.0L526.1 603.3L527.8 621.9L529.8 629.3L532.3 624.3L534.8 625.6L536.7 619.9L538.5 626.8L540.9 625.6L543.4 624.3L545.4 626.8L547.1 635.5L549.0 636.6L549.0 637.8L547.1 638.9L545.4 647.6L543.4 650.1L540.9 648.8L538.5 647.6L536.7 654.5L534.8 648.8L532.3 650.1L529.8 645.1L527.8 652.5L526.1 671.1L524.1 667.4L522.4 662.4L520.7 642.6L518.7 638.2L506.3 638.9L503.9 641.4L501.9 648.8L498.9 648.8L496.4 646.3L494.0 648.8L490.3 645.1L487.0 644.6L484.8 651.2L482.1 647.6L479.6 650.1L477.1 647.6L474.9 652.5L472.7 662.4L471.0 658.7L469.2 647.6L465.5 647.1L463.0 651.2L459.3 650.1L457.4 657.5L455.6 671.1L453.8 672.2L452.3 702.0L451.5 701.2L450.0 667.2L448.7 642.6L447.0 638.2L437.0 638.4L432.1 640.2L430.2 643.9L428.0 661.7L425.5 647.6L423.0 648.8L421.0 643.9L418.8 646.2L417.0 662.9L415.3 653.8L413.6 650.1L411.1 657.0L408.7 651.2L406.2 653.8L403.7 661.7L402.0 640.2L400.0 638.2L388.4 638.9L381.0 640.7L376.0 641.4L374.3 650.1L372.3 647.1L368.6 647.1L364.9 648.8L361.2 648.8L358.7 653.8L355.7 653.8L353.0 664.9L350.8 650.1L348.8 643.9L345.8 647.6L342.6 655.0L340.1 662.9L337.7 648.8L335.6 659.9L334.5 682.2L333.5 707.2L332.4 723.2L331.6 723.2L330.7 709.2L329.3 667.2L327.8 642.6L325.3 638.9L319.0 639.4L313.0 641.4L310.0 645.2L308.0 659.2L304.8 651.2L302.3 648.8L299.3 658.0L297.4 651.2L294.9 647.6L291.9 653.8L288.2 650.1L284.5 651.2L281.5 655.0L278.8 663.7L275.9 652.2L273.4 648.8L269.7 646.2L266.7 648.8L264.0 659.9L259.8 650.1L256.8 665.4L255.5 641.2L254.6 637.5zM643.6 636.9L644.2 634.2L646.5 604.1L648.4 616.9L650.2 615.7L652.1 624.3L654.1 623.2L655.6 605.8L657.6 623.2L659.6 626.8L661.3 623.2L663.3 630.5L665.7 628.1L667.5 614.5L669.0 597.9L670.7 607.0L671.7 603.3L673.4 615.7L675.4 621.9L677.1 618.2L679.3 624.3L681.1 623.2L682.6 615.7L684.3 625.6L686.8 623.2L689.2 621.9L691.0 626.8L693.2 619.9L695.2 626.8L697.1 626.8L698.6 623.8L700.6 631.3L704.1 633.0L709.0 634.7L715.2 635.5L716.9 624.3L718.7 567.5L720.4 607.0L721.9 602.2L723.9 563.8L725.8 609.5L727.8 624.3L730.0 620.6L732.5 619.4L735.0 625.6L737.5 631.8L739.4 625.6L741.7 600.8L743.6 609.5L745.6 619.4L747.6 625.6L749.8 621.9L752.3 625.6L754.8 624.3L757.2 627.3L759.7 625.6L762.2 628.1L764.9 623.2L766.6 630.5L770.8 631.8L774.5 633.7L780.0 635.0L788.4 635.8L790.6 629.4L792.5 592.6L794.5 612.7L796.7 616.0L798.9 619.6L800.9 623.8L802.8 621.0L805.1 623.8L807.6 610.7L809.8 623.8L811.5 628.0L813.4 621.9L815.7 629.4L818.5 633.6L821.8 635.8L837.1 635.8L839.1 618.2L841.6 575.6L843.5 598.7L845.5 618.2L848.3 621.0L851.1 623.8L853.0 621.6L855.2 626.6L858.0 628.8L860.2 625.2L862.0 614.1L864.4 614.9L866.4 623.8L869.2 628.0L873.3 628.8L875.6 621.6L877.5 628.0L880.3 629.4L883.1 630.8L885.9 628.0L888.7 629.4L890.9 630.8L892.6 622.4L894.8 633.6L897.0 635.8L908.7 635.8L910.4 623.8L912.3 613.2L914.6 619.6L916.5 613.2L918.8 621.0L920.7 625.2L923.5 628.0L925.4 625.2L927.7 628.8L930.5 628.0L932.7 627.2L934.6 623.0L936.6 633.6L939.4 635.5L957.0 636.4L957.0 638.0L939.4 638.9L936.6 640.8L934.6 651.4L932.7 647.2L930.5 646.4L927.7 645.6L925.4 649.2L923.5 646.4L920.7 649.2L918.8 653.4L916.5 661.2L914.6 654.8L912.3 661.2L910.4 650.6L908.7 638.6L897.0 638.6L894.8 640.8L892.6 652.0L890.9 643.6L888.7 645.0L885.9 646.4L883.1 643.6L880.3 645.0L877.5 646.4L875.6 652.8L873.3 645.6L869.2 646.4L866.4 650.6L864.4 659.5L862.0 660.3L860.2 649.2L858.0 645.6L855.2 647.8L853.0 652.8L851.1 650.6L848.3 653.4L845.5 656.2L843.5 675.7L841.6 698.8L839.1 656.2L837.1 638.6L821.8 638.6L818.5 640.8L815.7 645.0L813.4 652.5L811.5 646.4L809.8 650.6L807.6 663.7L805.1 650.6L802.8 653.4L800.9 650.6L798.9 654.8L796.7 658.4L794.5 661.7L792.5 681.8L790.6 645.0L788.4 638.6L780.0 639.4L774.5 640.7L770.8 642.6L766.6 643.9L764.9 651.2L762.2 646.3L759.7 648.8L757.2 647.1L754.8 650.1L752.3 648.8L749.8 652.5L747.6 648.8L745.6 655.0L743.6 664.9L741.7 673.6L739.4 648.8L737.5 642.6L735.0 648.8L732.5 655.0L730.0 653.8L727.8 650.1L725.8 664.9L723.9 710.6L721.9 672.2L720.4 667.4L718.7 706.9L716.9 650.1L715.2 638.9L709.0 639.7L704.1 641.4L700.6 643.1L698.6 650.6L697.1 647.6L695.2 647.6L693.2 654.5L691.0 647.6L689.2 652.5L686.8 651.2L684.3 648.8L682.6 658.7L681.1 651.2L679.3 650.1L677.1 656.2L675.4 652.5L673.4 658.7L671.7 671.1L670.7 667.4L669.0 676.5L667.5 659.9L665.7 646.3L663.3 643.9L661.3 651.2L659.6 647.6L657.6 651.2L655.6 668.6L654.1 651.2L652.1 650.1L650.2 658.7L648.4 657.5L646.5 670.3L644.2 640.2L643.6 637.5z" fill="#6fe0f6" stroke="#6fe0f6" stroke-width=".8" stroke-linejoin="round"/><path d="M254.6 636.9L255.2 634.7L255.8 631.1L256.4 629.8L257.0 628.7L257.6 627.9L258.2 627.4L258.8 627.6L259.4 628.3L260.0 628.8L260.6 628.9L261.2 628.8L261.8 628.4L262.4 627.9L263.0 627.6L263.6 627.5L264.2 627.8L264.8 628.2L265.4 628.8L266.0 629.5L266.6 630.4L267.2 631.1L267.8 631.6L268.4 632.0L269.0 632.2L269.6 632.3L270.2 632.3L270.8 632.2L271.4 632.1L272.0 631.9L272.6 631.6L273.2 631.3L273.8 631.0L274.4 630.6L275.0 630.0L275.6 629.4L276.2 628.6L276.8 627.7L277.4 626.9L278.0 626.4L278.6 626.0L279.2 626.0L279.8 626.1L280.4 626.5L281.0 627.2L281.6 627.9L282.2 628.5L282.8 629.0L283.4 629.4L284.0 629.7L284.6 630.0L285.2 630.2L285.8 630.3L286.4 630.5L287.0 630.5L287.6 630.5L288.2 630.4L288.8 630.3L289.4 630.1L290.0 629.9L290.6 629.7L291.2 629.7L291.8 629.7L292.4 629.9L293.0 630.2L293.6 630.5L294.2 630.8L294.8 631.0L295.4 631.1L296.0 630.9L296.6 630.5L297.2 629.8L297.8 629.3L298.4 628.9L299.0 628.7L299.6 628.7L300.2 628.8L300.8 629.2L301.4 629.6L302.0 630.1L302.6 630.4L303.2 630.5L303.8 630.4L304.4 630.1L305.0 629.6L305.6 629.0L306.2 628.5L306.8 628.3L307.4 628.4L308.0 628.8L308.6 629.5L309.2 630.3L309.8 631.3L310.4 632.4L311.0 633.4L311.6 634.0L312.2 634.5L312.8 634.8L313.4 635.0L314.0 635.2L314.6 635.3L315.2 635.5L315.8 635.6L316.4 635.7L317.0 635.8L317.6 635.9L318.2 635.9L318.8 636.0L319.4 636.1L320.0 636.1L320.6 636.2L321.2 636.2L321.8 636.2L322.4 636.2L323.0 636.3L323.6 636.3L324.2 636.2L324.8 636.1L325.4 635.9L326.0 635.5L326.6 634.4L327.2 633.0L327.8 632.2L328.4 626.0L329.0 621.1L329.6 615.7L330.2 610.4L330.8 605.9L331.4 602.5L332.0 600.9L332.6 601.4L333.2 604.0L333.8 607.9L334.4 612.4L335.0 617.0L335.6 621.3L336.2 624.8L336.8 627.0L337.4 628.1L338.0 628.2L338.6 627.9L339.2 627.6L339.8 627.1L340.4 626.7L341.0 626.7L341.6 626.9L342.2 627.5L342.8 628.3L343.4 629.1L344.0 629.9L344.6 630.5L345.2 631.1L345.8 631.7L346.4 632.2L347.0 632.6L347.6 632.8L348.2 632.8L348.8 632.6L349.4 632.1L350.0 631.3L350.6 630.2L351.2 628.8L351.8 627.7L352.4 626.9L353.0 626.4L353.6 626.2L354.2 626.4L354.8 626.8L355.4 627.4L356.0 628.0L356.6 628.5L357.2 628.8L357.8 629.1L358.4 629.3L359.0 629.6L359.6 630.0L360.2 630.3L360.8 630.6L361.4 630.9L362.0 631.2L362.6 631.3L363.2 631.4L363.8 631.4L364.4 631.5L365.0 631.5L365.6 631.6L366.2 631.7L366.8 631.8L367.4 631.9L368.0 632.0L368.6 632.1L369.2 632.2L369.8 632.2L370.4 632.2L371.0 632.2L371.6 632.1L372.2 631.9L372.8 631.8L373.4 632.0L374.0 632.3L374.6 632.7L375.2 633.1L375.8 633.6L376.4 634.2L377.0 634.8L377.6 635.1L378.2 635.3L378.8 635.3L379.4 635.3L380.0 635.4L380.6 635.4L381.2 635.5L381.8 635.6L382.4 635.6L383.0 635.7L383.6 635.8L384.2 635.8L384.8 635.9L385.4 636.0L386.0 636.1L386.6 636.1L387.2 636.2L387.8 636.2L388.4 636.3L389.0 636.3L389.6 636.4L390.2 636.4L390.8 636.4L391.4 636.4L392.0 636.5L392.6 636.5L393.2 636.5L393.8 636.5L394.4 636.5L395.0 636.5L395.6 636.6L396.2 636.6L396.8 636.6L397.4 636.6L398.0 636.6L398.6 636.6L399.2 636.6L399.8 636.4L400.4 636.0L401.0 635.4L401.6 634.8L402.2 632.2L402.8 630.9L403.4 629.7L404.0 628.8L404.6 627.9L405.2 627.6L405.8 627.9L406.4 628.5L407.0 629.0L407.6 629.3L408.2 629.4L408.8 629.2L409.4 629.0L410.0 628.8L410.6 628.7L411.2 628.8L411.8 628.9L412.4 629.1L413.0 629.2L413.6 629.3L414.2 629.1L414.8 628.6L415.4 628.1L416.0 627.8L416.6 628.0L417.2 628.5L417.8 629.1L418.4 629.9L419.0 630.9L419.6 632.0L420.2 632.7L420.8 632.9L421.4 632.8L422.0 632.6L422.6 632.4L423.2 632.1L423.8 631.8L424.4 631.4L425.0 630.9L425.6 630.2L426.2 629.4L426.8 628.9L427.4 628.7L428.0 628.8L428.6 629.3L429.2 630.1L429.8 631.2L430.4 632.6L431.0 633.8L431.6 634.7L432.2 635.3L432.8 635.6L433.4 635.9L434.0 636.0L434.6 636.2L435.2 636.3L435.8 636.4L436.4 636.4L437.0 636.5L437.6 636.6L438.2 636.6L438.8 636.6L439.4 636.6L440.0 636.6L440.6 636.6L441.2 636.6L441.8 636.6L442.4 636.7L443.0 636.7L443.6 636.7L444.2 636.7L444.8 636.7L445.4 636.6L446.0 636.5L446.6 636.3L447.2 635.8L447.8 634.4L448.4 632.9L449.0 627.9L449.6 623.8L450.2 619.7L450.8 616.2L451.4 613.8L452.0 612.8L452.6 612.6L453.2 613.3L453.8 615.0L454.4 617.4L455.0 619.9L455.6 621.9L456.2 623.3L456.8 624.7L457.4 626.1L458.0 627.5L458.6 628.6L459.2 629.4L459.8 630.0L460.4 630.3L461.0 630.4L461.6 630.5L462.2 630.5L462.8 630.7L463.4 630.9L464.0 631.1L464.6 631.4L465.2 631.6L465.8 631.9L466.4 632.0L467.0 632.1L467.6 632.0L468.2 631.6L468.8 630.9L469.4 630.1L470.0 629.2L470.6 628.2L471.2 627.3L471.8 626.7L472.4 626.5L473.0 626.7L473.6 627.2L474.2 627.9L474.8 628.7L475.4 629.7L476.0 630.4L476.6 630.9L477.2 631.1L477.8 631.2L478.4 631.3L479.0 631.3L479.6 631.3L480.2 631.3L480.8 631.4L481.4 631.4L482.0 631.4L482.6 631.3L483.2 631.2L483.8 631.2L484.4 631.3L485.0 631.5L485.6 631.8L486.2 632.1L486.8 632.5L487.4 632.9L488.0 633.2L488.6 633.3L489.2 633.3L489.8 633.1L490.4 633.0L491.0 632.8L491.6 632.6L492.2 632.3L492.8 632.1L493.4 632.0L494.0 632.0L494.6 632.0L495.2 632.0L495.8 632.1L496.4 632.1L497.0 632.0L497.6 632.0L498.2 631.9L498.8 631.7L499.4 631.6L500.0 631.5L500.6 631.6L501.2 631.9L501.8 632.3L502.4 632.9L503.0 633.4L503.6 634.0L504.2 634.7L504.8 635.3L505.4 635.7L506.0 636.0L506.6 636.2L507.2 636.3L507.8 636.4L508.4 636.4L509.0 636.4L509.6 636.4L510.2 636.5L510.8 636.5L511.4 636.5L512.0 636.5L512.6 636.5L513.2 636.5L513.8 636.6L514.4 636.6L515.0 636.6L515.6 636.6L516.2 636.6L516.8 636.6L517.4 636.6L518.0 636.4L518.6 636.3L519.2 635.5L519.8 634.4L520.4 632.8L521.0 631.1L521.6 629.3L522.2 627.5L522.8 625.7L523.4 624.0L524.0 622.7L524.6 622.2L525.2 622.4L525.8 623.2L526.4 624.3L527.0 625.6L527.6 627.1L528.2 628.8L528.8 630.3L529.4 631.3L530.0 631.7L530.6 631.8L531.2 631.8L531.8 631.7L532.4 631.4L533.0 631.2L533.6 631.0L534.2 630.7L534.8 630.5L535.4 630.3L536.0 630.3L536.6 630.4L537.2 630.4L537.8 630.6L538.4 630.8L539.0 631.2L539.6 631.4L540.2 631.5L540.8 631.4L541.4 631.3L542.0 631.2L542.6 631.2L543.2 631.2L543.8 631.4L544.4 631.8L545.0 632.5L545.6 633.3L546.2 634.0L546.8 634.8L547.4 635.8L548.0 636.1L548.6 636.5L548.6 637.9L548.0 638.3L547.4 638.6L546.8 639.6L546.2 640.4L545.6 641.1L545.0 641.9L544.4 642.6L543.8 643.0L543.2 643.2L542.6 643.2L542.0 643.2L541.4 643.1L540.8 643.0L540.2 642.9L539.6 643.0L539.0 643.2L538.4 643.6L537.8 643.8L537.2 644.0L536.6 644.0L536.0 644.1L535.4 644.1L534.8 643.9L534.2 643.7L533.6 643.4L533.0 643.2L532.4 643.0L531.8 642.7L531.2 642.6L530.6 642.6L530.0 642.7L529.4 643.1L528.8 644.1L528.2 645.6L527.6 647.3L527.0 648.8L526.4 650.1L525.8 651.2L525.2 652.0L524.6 652.2L524.0 651.7L523.4 650.4L522.8 648.7L522.2 646.9L521.6 645.1L521.0 643.3L520.4 641.6L519.8 640.0L519.2 638.9L518.6 638.1L518.0 638.0L517.4 637.8L516.8 637.8L516.2 637.8L515.6 637.8L515.0 637.8L514.4 637.8L513.8 637.8L513.2 637.9L512.6 637.9L512.0 637.9L511.4 637.9L510.8 637.9L510.2 637.9L509.6 638.0L509.0 638.0L508.4 638.0L507.8 638.0L507.2 638.1L506.6 638.2L506.0 638.4L505.4 638.7L504.8 639.1L504.2 639.7L503.6 640.4L503.0 641.0L502.4 641.5L501.8 642.1L501.2 642.5L500.6 642.8L500.0 642.9L499.4 642.8L498.8 642.7L498.2 642.5L497.6 642.4L497.0 642.4L496.4 642.3L495.8 642.3L495.2 642.4L494.6 642.4L494.0 642.4L493.4 642.4L492.8 642.3L492.2 642.1L491.6 641.8L491.0 641.6L490.4 641.4L489.8 641.3L489.2 641.1L488.6 641.1L488.0 641.2L487.4 641.5L486.8 641.9L486.2 642.3L485.6 642.6L485.0 642.9L484.4 643.1L483.8 643.2L483.2 643.2L482.6 643.1L482.0 643.0L481.4 643.0L480.8 643.0L480.2 643.1L479.6 643.1L479.0 643.1L478.4 643.1L477.8 643.2L477.2 643.3L476.6 643.5L476.0 644.0L475.4 644.7L474.8 645.7L474.2 646.5L473.6 647.2L473.0 647.7L472.4 647.9L471.8 647.7L471.2 647.1L470.6 646.2L470.0 645.2L469.4 644.3L468.8 643.5L468.2 642.8L467.6 642.4L467.0 642.3L466.4 642.4L465.8 642.5L465.2 642.8L464.6 643.0L464.0 643.3L463.4 643.5L462.8 643.7L462.2 643.9L461.6 643.9L461.0 644.0L460.4 644.1L459.8 644.4L459.2 645.0L458.6 645.8L458.0 646.9L457.4 648.3L456.8 649.7L456.2 651.1L455.6 652.5L455.0 654.5L454.4 657.0L453.8 659.4L453.2 661.1L452.6 661.8L452.0 661.6L451.4 660.6L450.8 658.2L450.2 654.7L449.6 650.6L449.0 646.5L448.4 641.5L447.8 640.0L447.2 638.6L446.6 638.1L446.0 637.9L445.4 637.8L444.8 637.7L444.2 637.7L443.6 637.7L443.0 637.7L442.4 637.7L441.8 637.8L441.2 637.8L440.6 637.8L440.0 637.8L439.4 637.8L438.8 637.8L438.2 637.8L437.6 637.8L437.0 637.9L436.4 638.0L435.8 638.0L435.2 638.1L434.6 638.2L434.0 638.4L433.4 638.5L432.8 638.8L432.2 639.1L431.6 639.7L431.0 640.6L430.4 641.8L429.8 643.2L429.2 644.3L428.6 645.1L428.0 645.6L427.4 645.7L426.8 645.5L426.2 645.0L425.6 644.2L425.0 643.5L424.4 643.0L423.8 642.6L423.2 642.3L422.6 642.0L422.0 641.8L421.4 641.6L420.8 641.5L420.2 641.7L419.6 642.4L419.0 643.5L418.4 644.5L417.8 645.3L417.2 645.9L416.6 646.4L416.0 646.6L415.4 646.3L414.8 645.8L414.2 645.3L413.6 645.1L413.0 645.2L412.4 645.3L411.8 645.5L411.2 645.6L410.6 645.7L410.0 645.6L409.4 645.4L408.8 645.2L408.2 645.0L407.6 645.1L407.0 645.4L406.4 645.9L405.8 646.5L405.2 646.8L404.6 646.5L404.0 645.6L403.4 644.7L402.8 643.5L402.2 642.2L401.6 639.6L401.0 639.0L400.4 638.4L399.8 638.0L399.2 637.8L398.6 637.8L398.0 637.8L397.4 637.8L396.8 637.8L396.2 637.8L395.6 637.8L395.0 637.9L394.4 637.9L393.8 637.9L393.2 637.9L392.6 637.9L392.0 637.9L391.4 638.0L390.8 638.0L390.2 638.0L389.6 638.0L389.0 638.1L388.4 638.1L387.8 638.2L387.2 638.2L386.6 638.3L386.0 638.3L385.4 638.4L384.8 638.5L384.2 638.6L383.6 638.6L383.0 638.7L382.4 638.8L381.8 638.8L381.2 638.9L380.6 639.0L380.0 639.0L379.4 639.1L378.8 639.1L378.2 639.1L377.6 639.3L377.0 639.6L376.4 640.2L375.8 640.8L375.2 641.3L374.6 641.7L374.0 642.1L373.4 642.4L372.8 642.6L372.2 642.5L371.6 642.4L371.0 642.2L370.4 642.2L369.8 642.2L369.2 642.2L368.6 642.3L368.0 642.4L367.4 642.5L366.8 642.6L366.2 642.7L365.6 642.8L365.0 642.9L364.4 642.9L363.8 643.0L363.2 643.0L362.6 643.1L362.0 643.2L361.4 643.5L360.8 643.8L360.2 644.1L359.6 644.4L359.0 644.8L358.4 645.1L357.8 645.3L357.2 645.6L356.6 645.9L356.0 646.4L355.4 647.0L354.8 647.6L354.2 648.0L353.6 648.2L353.0 648.0L352.4 647.5L351.8 646.7L351.2 645.6L350.6 644.2L350.0 643.1L349.4 642.3L348.8 641.8L348.2 641.6L347.6 641.6L347.0 641.8L346.4 642.2L345.8 642.7L345.2 643.3L344.6 643.9L344.0 644.5L343.4 645.3L342.8 646.1L342.2 646.9L341.6 647.5L341.0 647.7L340.4 647.7L339.8 647.3L339.2 646.8L338.6 646.5L338.0 646.2L337.4 646.3L336.8 647.4L336.2 649.6L335.6 653.1L335.0 657.4L334.4 662.0L333.8 666.5L333.2 670.4L332.6 673.0L332.0 673.5L331.4 671.9L330.8 668.5L330.2 664.0L329.6 658.7L329.0 653.3L328.4 648.4L327.8 642.2L327.2 641.4L326.6 640.0L326.0 638.9L325.4 638.5L324.8 638.3L324.2 638.2L323.6 638.1L323.0 638.1L322.4 638.2L321.8 638.2L321.2 638.2L320.6 638.2L320.0 638.3L319.4 638.3L318.8 638.4L318.2 638.5L317.6 638.5L317.0 638.6L316.4 638.7L315.8 638.8L315.2 638.9L314.6 639.1L314.0 639.2L313.4 639.4L312.8 639.6L312.2 639.9L311.6 640.4L311.0 641.0L310.4 642.0L309.8 643.1L309.2 644.1L308.6 644.9L308.0 645.6L307.4 646.0L306.8 646.1L306.2 645.9L305.6 645.4L305.0 644.8L304.4 644.3L303.8 644.0L303.2 643.9L302.6 644.0L302.0 644.3L301.4 644.8L300.8 645.2L300.2 645.6L299.6 645.7L299.0 645.7L298.4 645.5L297.8 645.1L297.2 644.6L296.6 643.9L296.0 643.5L295.4 643.3L294.8 643.4L294.2 643.6L293.6 643.9L293.0 644.2L292.4 644.5L291.8 644.7L291.2 644.7L290.6 644.7L290.0 644.5L289.4 644.3L288.8 644.1L288.2 644.0L287.6 643.9L287.0 643.9L286.4 643.9L285.8 644.1L285.2 644.2L284.6 644.4L284.0 644.7L283.4 645.0L282.8 645.4L282.2 645.9L281.6 646.5L281.0 647.2L280.4 647.9L279.8 648.3L279.2 648.4L278.6 648.4L278.0 648.0L277.4 647.5L276.8 646.7L276.2 645.8L275.6 645.0L275.0 644.4L274.4 643.8L273.8 643.4L273.2 643.1L272.6 642.8L272.0 642.5L271.4 642.3L270.8 642.2L270.2 642.1L269.6 642.1L269.0 642.2L268.4 642.4L267.8 642.8L267.2 643.3L266.6 644.0L266.0 644.9L265.4 645.6L264.8 646.2L264.2 646.6L263.6 646.9L263.0 646.8L262.4 646.5L261.8 646.0L261.2 645.6L260.6 645.5L260.0 645.6L259.4 646.1L258.8 646.8L258.2 647.0L257.6 646.5L257.0 645.7L256.4 644.6L255.8 643.3L255.2 639.7L254.6 637.5zM643.6 636.9L644.2 634.4L644.8 630.5L645.4 628.7L646.0 627.1L646.6 626.0L647.2 625.2L647.8 624.9L648.4 625.2L649.0 626.1L649.6 627.0L650.2 627.8L650.8 628.3L651.4 628.8L652.0 629.3L652.6 629.5L653.2 629.0L653.8 628.1L654.4 627.4L655.0 626.9L655.6 626.8L656.2 626.9L656.8 627.2L657.4 627.9L658.0 629.2L658.6 630.2L659.2 630.7L659.8 631.0L660.4 631.3L661.0 631.6L661.6 631.9L662.2 632.1L662.8 632.3L663.4 632.6L664.0 632.8L664.6 632.5L665.2 631.8L665.8 630.5L666.4 628.9L667.0 626.8L667.6 625.0L668.2 623.4L668.8 622.3L669.4 621.2L670.0 620.6L670.6 620.7L671.2 621.5L671.8 622.7L672.4 623.8L673.0 624.7L673.6 625.8L674.2 626.9L674.8 627.7L675.4 628.2L676.0 628.5L676.6 628.7L677.2 629.0L677.8 629.2L678.4 629.4L679.0 629.6L679.6 629.8L680.2 629.7L680.8 629.4L681.4 629.2L682.0 629.1L682.6 629.2L683.2 629.3L683.8 629.5L684.4 629.7L685.0 630.2L685.6 630.5L686.2 630.5L686.8 630.3L687.4 630.1L688.0 630.1L688.6 630.2L689.2 630.4L689.8 630.5L690.4 630.5L691.0 630.4L691.6 630.3L692.2 630.3L692.8 630.4L693.4 630.4L694.0 630.5L694.6 630.7L695.2 631.0L695.8 631.4L696.4 631.5L697.0 631.6L697.6 631.6L698.2 631.8L698.8 632.1L699.4 632.5L700.0 632.9L700.6 633.3L701.2 633.9L701.8 634.3L702.4 634.6L703.0 634.8L703.6 635.0L704.2 635.1L704.8 635.2L705.4 635.3L706.0 635.4L706.6 635.5L707.2 635.6L707.8 635.7L708.4 635.8L709.0 635.9L709.6 636.0L710.2 636.0L710.8 636.1L711.4 636.1L712.0 636.1L712.6 636.2L713.2 636.2L713.8 636.0L714.4 635.5L715.0 635.6L715.6 633.2L716.2 629.6L716.8 625.9L717.4 621.4L718.0 618.9L718.6 617.2L719.2 615.7L719.8 615.1L720.4 615.2L721.0 615.6L721.6 615.2L722.2 613.9L722.8 612.6L723.4 612.1L724.0 612.6L724.6 613.7L725.2 615.8L725.8 619.0L726.4 622.7L727.0 625.7L727.6 627.7L728.2 628.7L728.8 629.2L729.4 629.4L730.0 629.2L730.6 629.0L731.2 628.8L731.8 628.9L732.4 629.1L733.0 629.4L733.6 629.9L734.2 630.5L734.8 631.2L735.4 631.9L736.0 632.5L736.6 632.8L737.2 632.9L737.8 632.6L738.4 631.8L739.0 630.5L739.6 628.6L740.2 626.6L740.8 625.1L741.4 623.9L742.0 622.9L742.6 622.6L743.2 622.9L743.8 623.9L744.4 625.3L745.0 626.6L745.6 627.8L746.2 628.8L746.8 629.5L747.4 630.0L748.0 630.2L748.6 630.4L749.2 630.4L749.8 630.4L750.4 630.5L751.0 630.5L751.6 630.7L752.2 630.8L752.8 630.9L753.4 631.0L754.0 631.1L754.6 631.2L755.2 631.3L755.8 631.4L756.4 631.6L757.0 631.7L757.6 631.7L758.2 631.8L758.8 631.8L759.4 631.9L760.0 631.9L760.6 632.0L761.2 632.0L761.8 631.9L762.4 631.8L763.0 631.6L763.6 631.6L764.2 631.6L764.8 631.8L765.4 632.0L766.0 632.4L766.6 632.8L767.2 633.3L767.8 633.8L768.4 634.1L769.0 634.2L769.6 634.3L770.2 634.4L770.8 634.6L771.4 634.7L772.0 634.8L772.6 635.0L773.2 635.1L773.8 635.2L774.4 635.4L775.0 635.5L775.6 635.6L776.2 635.6L776.8 635.7L777.4 635.8L778.0 635.9L778.6 635.9L779.2 636.0L779.8 636.0L780.4 636.1L781.0 636.1L781.6 636.2L782.2 636.2L782.8 636.2L783.4 636.3L784.0 636.3L784.6 636.3L785.2 636.3L785.8 636.4L786.4 636.4L787.0 636.3L787.6 636.1L788.2 635.9L788.8 635.2L789.4 633.8L790.0 631.6L790.6 630.0L791.2 626.5L791.8 624.6L792.4 623.2L793.0 622.1L793.6 621.7L794.2 622.1L794.8 623.4L795.4 624.8L796.0 625.9L796.6 626.6L797.2 627.0L797.8 627.5L798.4 628.1L799.0 628.6L799.6 629.0L800.2 629.3L800.8 629.5L801.4 629.6L802.0 629.7L802.6 629.8L803.2 629.8L803.8 629.6L804.4 629.3L805.0 628.8L805.6 628.1L806.2 627.6L806.8 627.2L807.4 627.1L808.0 627.2L808.6 627.6L809.2 628.4L809.8 629.4L810.4 630.3L811.0 630.8L811.6 631.0L812.2 631.1L812.8 631.2L813.4 631.3L814.0 631.5L814.6 631.8L815.2 632.3L815.8 632.9L816.4 633.6L817.0 634.2L817.6 634.6L818.2 635.0L818.8 635.3L819.4 635.6L820.0 635.9L820.6 636.1L821.2 636.2L821.8 636.3L822.4 636.4L823.0 636.5L823.6 636.5L824.2 636.5L824.8 636.5L825.4 636.5L826.0 636.5L826.6 636.5L827.2 636.5L827.8 636.5L828.4 636.5L829.0 636.5L829.6 636.5L830.2 636.5L830.8 636.5L831.4 636.5L832.0 636.5L832.6 636.5L833.2 636.5L833.8 636.5L834.4 636.5L835.0 636.5L835.6 636.3L836.2 635.9L836.8 635.9L837.4 633.5L838.0 631.1L838.6 628.3L839.2 624.7L839.8 621.0L840.4 618.0L841.0 615.8L841.6 614.5L842.2 614.3L842.8 615.2L843.4 617.1L844.0 619.7L844.6 622.3L845.2 624.4L845.8 626.0L846.4 627.3L847.0 628.2L847.6 628.8L848.2 629.1L848.8 629.4L849.4 629.6L850.0 629.8L850.6 629.9L851.2 629.9L851.8 630.0L852.4 630.2L853.0 630.3L853.6 630.6L854.2 630.8L854.8 631.2L855.4 631.6L856.0 632.0L856.6 632.3L857.2 632.4L857.8 632.4L858.4 632.2L859.0 631.7L859.6 631.0L860.2 630.0L860.8 629.1L861.4 628.2L862.0 627.4L862.6 626.8L863.2 626.5L863.8 626.6L864.4 627.2L865.0 627.9L865.6 628.6L866.2 629.4L866.8 630.2L867.4 631.0L868.0 631.6L868.6 632.0L869.2 632.2L869.8 632.5L870.4 632.6L871.0 632.8L871.6 632.8L872.2 632.7L872.8 632.4L873.4 632.0L874.0 631.6L874.6 631.3L875.2 631.2L875.8 631.2L876.4 631.3L877.0 631.5L877.6 631.9L878.2 632.4L878.8 632.8L879.4 633.1L880.0 633.2L880.6 633.4L881.2 633.5L881.8 633.6L882.4 633.6L883.0 633.6L883.6 633.5L884.2 633.4L884.8 633.2L885.4 633.1L886.0 633.0L886.6 633.0L887.2 633.0L887.8 633.1L888.4 633.3L889.0 633.4L889.6 633.3L890.2 633.0L890.8 632.7L891.4 632.4L892.0 632.4L892.6 632.5L893.2 632.7L893.8 633.1L894.4 633.7L895.0 634.5L895.6 635.3L896.2 635.8L896.8 636.2L897.4 636.3L898.0 636.4L898.6 636.5L899.2 636.5L899.8 636.5L900.4 636.5L901.0 636.5L901.6 636.5L902.2 636.5L902.8 636.5L903.4 636.5L904.0 636.5L904.6 636.5L905.2 636.5L905.8 636.5L906.4 636.5L907.0 636.4L907.6 636.0L908.2 635.9L908.8 635.3L909.4 633.2L910.0 631.8L910.6 630.4L911.2 629.0L911.8 628.0L912.4 627.5L913.0 627.2L913.6 626.9L914.2 626.7L914.8 626.7L915.4 626.8L916.0 626.9L916.6 627.1L917.2 627.3L917.8 627.6L918.4 628.2L919.0 629.0L919.6 629.8L920.2 630.4L920.8 630.9L921.4 631.4L922.0 631.7L922.6 631.9L923.2 631.9L923.8 631.9L924.4 631.9L925.0 632.0L925.6 632.1L926.2 632.1L926.8 632.2L927.4 632.4L928.0 632.6L928.6 632.7L929.2 632.7L929.8 632.7L930.4 632.6L931.0 632.5L931.6 632.3L932.2 632.0L932.8 631.7L933.4 631.6L934.0 631.8L934.6 632.2L935.2 632.6L935.8 633.2L936.4 633.9L937.0 634.7L937.6 635.3L938.2 635.8L938.8 636.1L939.4 636.2L940.0 636.3L940.6 636.3L941.2 636.4L941.8 636.4L942.4 636.4L943.0 636.4L943.6 636.5L944.2 636.5L944.8 636.5L945.4 636.5L946.0 636.5L946.6 636.5L947.2 636.5L947.8 636.6L948.4 636.6L949.0 636.6L949.6 636.6L950.2 636.6L950.8 636.6L951.4 636.7L952.0 636.7L952.6 636.7L953.2 636.7L953.8 636.7L954.4 636.7L955.0 636.7L955.6 636.8L956.2 636.8L956.8 636.8L956.8 637.6L956.2 637.6L955.6 637.6L955.0 637.7L954.4 637.7L953.8 637.7L953.2 637.7L952.6 637.7L952.0 637.7L951.4 637.7L950.8 637.8L950.2 637.8L949.6 637.8L949.0 637.8L948.4 637.8L947.8 637.8L947.2 637.9L946.6 637.9L946.0 637.9L945.4 637.9L944.8 637.9L944.2 637.9L943.6 637.9L943.0 638.0L942.4 638.0L941.8 638.0L941.2 638.0L940.6 638.1L940.0 638.1L939.4 638.2L938.8 638.3L938.2 638.6L937.6 639.1L937.0 639.7L936.4 640.5L935.8 641.2L935.2 641.8L934.6 642.2L934.0 642.6L933.4 642.8L932.8 642.7L932.2 642.4L931.6 642.1L931.0 641.9L930.4 641.8L929.8 641.7L929.2 641.7L928.6 641.7L928.0 641.8L927.4 642.0L926.8 642.2L926.2 642.3L925.6 642.3L925.0 642.4L924.4 642.5L923.8 642.5L923.2 642.5L922.6 642.5L922.0 642.7L921.4 643.0L920.8 643.5L920.2 644.0L919.6 644.6L919.0 645.4L918.4 646.2L917.8 646.8L917.2 647.1L916.6 647.3L916.0 647.5L915.4 647.6L914.8 647.7L914.2 647.7L913.6 647.5L913.0 647.2L912.4 646.9L911.8 646.4L911.2 645.4L910.6 644.0L910.0 642.6L909.4 641.2L908.8 639.1L908.2 638.5L907.6 638.4L907.0 638.0L906.4 637.9L905.8 637.9L905.2 637.9L904.6 637.9L904.0 637.9L903.4 637.9L902.8 637.9L902.2 637.9L901.6 637.9L901.0 637.9L900.4 637.9L899.8 637.9L899.2 637.9L898.6 637.9L898.0 638.0L897.4 638.1L896.8 638.2L896.2 638.6L895.6 639.1L895.0 639.9L894.4 640.7L893.8 641.3L893.2 641.7L892.6 641.9L892.0 642.0L891.4 642.0L890.8 641.7L890.2 641.4L889.6 641.1L889.0 641.0L888.4 641.1L887.8 641.3L887.2 641.4L886.6 641.4L886.0 641.4L885.4 641.3L884.8 641.2L884.2 641.0L883.6 640.9L883.0 640.8L882.4 640.8L881.8 640.8L881.2 640.9L880.6 641.0L880.0 641.2L879.4 641.3L878.8 641.6L878.2 642.0L877.6 642.5L877.0 642.9L876.4 643.1L875.8 643.2L875.2 643.2L874.6 643.1L874.0 642.8L873.4 642.4L872.8 642.0L872.2 641.7L871.6 641.6L871.0 641.6L870.4 641.8L869.8 641.9L869.2 642.2L868.6 642.4L868.0 642.8L867.4 643.4L866.8 644.2L866.2 645.0L865.6 645.8L865.0 646.5L864.4 647.2L863.8 647.8L863.2 647.9L862.6 647.6L862.0 647.0L861.4 646.2L860.8 645.3L860.2 644.4L859.6 643.4L859.0 642.7L858.4 642.2L857.8 642.0L857.2 642.0L856.6 642.1L856.0 642.4L855.4 642.8L854.8 643.2L854.2 643.6L853.6 643.8L853.0 644.1L852.4 644.2L851.8 644.4L851.2 644.5L850.6 644.5L850.0 644.6L849.4 644.8L848.8 645.1L848.2 645.4L847.6 645.6L847.0 646.2L846.4 647.1L845.8 648.4L845.2 650.0L844.6 652.1L844.0 654.7L843.4 657.3L842.8 659.2L842.2 660.1L841.6 659.9L841.0 658.6L840.4 656.4L839.8 653.4L839.2 649.7L838.6 646.1L838.0 643.3L837.4 640.9L836.8 638.5L836.2 638.5L835.6 638.1L835.0 637.9L834.4 637.9L833.8 637.9L833.2 637.9L832.6 637.9L832.0 637.9L831.4 637.9L830.8 637.9L830.2 637.9L829.6 637.9L829.0 637.9L828.4 637.9L827.8 637.9L827.2 637.9L826.6 637.9L826.0 637.9L825.4 637.9L824.8 637.9L824.2 637.9L823.6 637.9L823.0 637.9L822.4 638.0L821.8 638.1L821.2 638.2L820.6 638.3L820.0 638.5L819.4 638.8L818.8 639.1L818.2 639.4L817.6 639.8L817.0 640.2L816.4 640.8L815.8 641.5L815.2 642.1L814.6 642.6L814.0 642.9L813.4 643.1L812.8 643.2L812.2 643.3L811.6 643.4L811.0 643.6L810.4 644.1L809.8 645.0L809.2 646.0L808.6 646.8L808.0 647.2L807.4 647.3L806.8 647.2L806.2 646.8L805.6 646.3L805.0 645.6L804.4 645.1L803.8 644.8L803.2 644.6L802.6 644.6L802.0 644.7L801.4 644.8L800.8 644.9L800.2 645.1L799.6 645.4L799.0 645.8L798.4 646.3L797.8 646.9L797.2 647.4L796.6 647.8L796.0 648.5L795.4 649.6L794.8 651.0L794.2 652.3L793.6 652.7L793.0 652.3L792.4 651.2L791.8 649.8L791.2 647.9L790.6 644.4L790.0 642.8L789.4 640.6L788.8 639.2L788.2 638.5L787.6 638.3L787.0 638.1L786.4 638.0L785.8 638.0L785.2 638.1L784.6 638.1L784.0 638.1L783.4 638.1L782.8 638.2L782.2 638.2L781.6 638.2L781.0 638.3L780.4 638.3L779.8 638.4L779.2 638.4L778.6 638.5L778.0 638.5L777.4 638.6L776.8 638.7L776.2 638.8L775.6 638.8L775.0 638.9L774.4 639.0L773.8 639.2L773.2 639.3L772.6 639.4L772.0 639.6L771.4 639.7L770.8 639.8L770.2 640.0L769.6 640.1L769.0 640.2L768.4 640.3L767.8 640.6L767.2 641.1L766.6 641.6L766.0 642.0L765.4 642.4L764.8 642.6L764.2 642.8L763.6 642.8L763.0 642.8L762.4 642.6L761.8 642.5L761.2 642.4L760.6 642.4L760.0 642.5L759.4 642.5L758.8 642.6L758.2 642.6L757.6 642.7L757.0 642.7L756.4 642.8L755.8 643.0L755.2 643.1L754.6 643.2L754.0 643.3L753.4 643.4L752.8 643.5L752.2 643.6L751.6 643.7L751.0 643.9L750.4 643.9L749.8 644.0L749.2 644.0L748.6 644.0L748.0 644.2L747.4 644.4L746.8 644.9L746.2 645.6L745.6 646.6L745.0 647.8L744.4 649.1L743.8 650.5L743.2 651.5L742.6 651.8L742.0 651.5L741.4 650.5L740.8 649.3L740.2 647.8L739.6 645.8L739.0 643.9L738.4 642.6L737.8 641.8L737.2 641.5L736.6 641.6L736.0 641.9L735.4 642.5L734.8 643.2L734.2 643.9L733.6 644.5L733.0 645.0L732.4 645.3L731.8 645.5L731.2 645.6L730.6 645.4L730.0 645.2L729.4 645.0L728.8 645.2L728.2 645.7L727.6 646.7L727.0 648.7L726.4 651.7L725.8 655.4L725.2 658.6L724.6 660.7L724.0 661.8L723.4 662.3L722.8 661.8L722.2 660.5L721.6 659.2L721.0 658.8L720.4 659.2L719.8 659.3L719.2 658.7L718.6 657.2L718.0 655.5L717.4 653.0L716.8 648.5L716.2 644.8L715.6 641.2L715.0 638.8L714.4 638.9L713.8 638.4L713.2 638.2L712.6 638.2L712.0 638.3L711.4 638.3L710.8 638.3L710.2 638.4L709.6 638.4L709.0 638.5L708.4 638.6L707.8 638.7L707.2 638.8L706.6 638.9L706.0 639.0L705.4 639.1L704.8 639.2L704.2 639.3L703.6 639.4L703.0 639.6L702.4 639.8L701.8 640.1L701.2 640.5L700.6 641.1L700.0 641.5L699.4 641.9L698.8 642.3L698.2 642.6L697.6 642.8L697.0 642.8L696.4 642.9L695.8 643.0L695.2 643.4L694.6 643.7L694.0 643.9L693.4 644.0L692.8 644.0L692.2 644.1L691.6 644.1L691.0 644.0L690.4 643.9L689.8 643.9L689.2 644.0L688.6 644.2L688.0 644.3L687.4 644.3L686.8 644.1L686.2 643.9L685.6 643.9L685.0 644.2L684.4 644.7L683.8 644.9L683.2 645.1L682.6 645.2L682.0 645.3L681.4 645.2L680.8 645.0L680.2 644.7L679.6 644.6L679.0 644.8L678.4 645.0L677.8 645.2L677.2 645.4L676.6 645.7L676.0 645.9L675.4 646.2L674.8 646.7L674.2 647.5L673.6 648.6L673.0 649.7L672.4 650.6L671.8 651.7L671.2 652.9L670.6 653.7L670.0 653.8L669.4 653.2L668.8 652.1L668.2 651.0L667.6 649.4L667.0 647.6L666.4 645.5L665.8 643.9L665.2 642.6L664.6 641.9L664.0 641.6L663.4 641.8L662.8 642.1L662.2 642.3L661.6 642.5L661.0 642.8L660.4 643.1L659.8 643.4L659.2 643.7L658.6 644.2L658.0 645.2L657.4 646.5L656.8 647.2L656.2 647.5L655.6 647.6L655.0 647.5L654.4 647.0L653.8 646.3L653.2 645.4L652.6 644.9L652.0 645.1L651.4 645.6L650.8 646.1L650.2 646.6L649.6 647.4L649.0 648.3L648.4 649.2L647.8 649.5L647.2 649.2L646.6 648.4L646.0 647.3L645.4 645.7L644.8 643.9L644.2 640.0L643.6 637.5z" fill="#8eeaf9"/><path d="M254.6 636.9L255.2 635.1L255.8 634.8L256.4 634.6L257.0 634.3L257.6 634.0L258.2 633.7L258.8 633.5L259.4 633.3L260.0 633.2L260.6 633.3L261.2 633.4L261.8 633.4L262.4 633.5L263.0 633.5L263.6 633.5L264.2 633.6L264.8 633.7L265.4 633.8L266.0 634.0L266.6 634.2L267.2 634.4L267.8 634.6L268.4 634.8L269.0 635.0L269.6 635.0L270.2 635.0L270.8 635.0L271.4 635.0L272.0 634.9L272.6 634.8L273.2 634.7L273.8 634.5L274.4 634.3L275.0 634.0L275.6 633.7L276.2 633.5L276.8 633.3L277.4 633.1L278.0 633.0L278.6 632.9L279.2 632.9L279.8 632.9L280.4 632.9L281.0 633.0L281.6 633.2L282.2 633.4L282.8 633.6L283.4 633.8L284.0 634.0L284.6 634.1L285.2 634.2L285.8 634.3L286.4 634.3L287.0 634.3L287.6 634.3L288.2 634.3L288.8 634.2L289.4 634.2L290.0 634.2L290.6 634.2L291.2 634.2L291.8 634.2L292.4 634.3L293.0 634.3L293.6 634.4L294.2 634.4L294.8 634.4L295.4 634.4L296.0 634.3L296.6 634.2L297.2 634.1L297.8 634.0L298.4 633.9L299.0 633.9L299.6 633.9L300.2 633.9L300.8 633.9L301.4 634.0L302.0 634.0L302.6 634.1L303.2 634.1L303.8 634.1L304.4 634.0L305.0 633.9L305.6 633.8L306.2 633.8L306.8 633.9L307.4 634.0L308.0 634.1L308.6 634.3L309.2 634.5L309.8 634.7L310.4 635.0L311.0 635.3L311.6 635.6L312.2 635.9L312.8 636.1L313.4 636.2L314.0 636.3L314.6 636.4L315.2 636.5L315.8 636.5L316.4 636.6L317.0 636.6L317.6 636.6L318.2 636.7L318.8 636.7L319.4 636.7L320.0 636.7L320.6 636.8L321.2 636.8L321.8 636.8L322.4 636.8L323.0 636.8L323.6 636.7L324.2 636.7L324.8 636.6L325.4 636.3L326.0 635.9L326.6 635.1L327.2 634.1L327.8 632.8L328.4 631.2L329.0 629.6L329.6 628.1L330.2 626.8L330.8 625.8L331.4 625.0L332.0 624.6L332.6 624.7L333.2 625.0L333.8 625.7L334.4 626.8L335.0 628.1L335.6 629.4L336.2 630.6L336.8 631.5L337.4 632.3L338.0 632.8L338.6 633.1L339.2 633.2L339.8 633.2L340.4 633.2L341.0 633.2L341.6 633.2L342.2 633.3L342.8 633.5L343.4 633.7L344.0 634.0L344.6 634.3L345.2 634.6L345.8 634.8L346.4 635.0L347.0 635.1L347.6 635.1L348.2 635.1L348.8 634.9L349.4 634.7L350.0 634.3L350.6 634.0L351.2 633.8L351.8 633.6L352.4 633.3L353.0 633.2L353.6 633.1L354.2 633.0L354.8 633.0L355.4 633.0L356.0 633.1L356.6 633.4L357.2 633.6L357.8 633.8L358.4 634.0L359.0 634.1L359.6 634.2L360.2 634.3L360.8 634.4L361.4 634.5L362.0 634.6L362.6 634.7L363.2 634.7L363.8 634.8L364.4 634.8L365.0 634.8L365.6 634.9L366.2 634.9L366.8 634.9L367.4 635.0L368.0 635.0L368.6 635.0L369.2 635.1L369.8 635.1L370.4 635.1L371.0 635.0L371.6 635.0L372.2 635.0L372.8 635.1L373.4 635.2L374.0 635.3L374.6 635.5L375.2 635.6L375.8 635.7L376.4 635.8L377.0 636.0L377.6 636.1L378.2 636.3L378.8 636.4L379.4 636.4L380.0 636.4L380.6 636.5L381.2 636.5L381.8 636.5L382.4 636.5L383.0 636.6L383.6 636.6L384.2 636.6L384.8 636.7L385.4 636.7L386.0 636.7L386.6 636.7L387.2 636.8L387.8 636.8L388.4 636.8L389.0 636.8L389.6 636.8L390.2 636.9L390.8 636.9L391.4 636.9L392.0 636.9L392.6 636.9L393.2 636.9L393.8 636.9L394.4 636.9L395.0 636.9L395.6 636.9L396.2 636.9L396.8 636.9L397.4 636.9L398.0 636.9L398.6 636.9L399.2 636.8L399.8 636.6L400.4 636.2L401.0 635.8L401.6 635.4L402.2 635.0L402.8 634.8L403.4 634.5L404.0 634.2L404.6 633.9L405.2 633.7L405.8 633.5L406.4 633.5L407.0 633.5L407.6 633.6L408.2 633.7L408.8 633.7L409.4 633.7L410.0 633.8L410.6 633.8L411.2 633.8L411.8 633.8L412.4 633.8L413.0 633.7L413.6 633.6L414.2 633.4L414.8 633.5L415.4 633.6L416.0 633.8L416.6 633.9L417.2 634.0L417.8 634.1L418.4 634.2L419.0 634.4L419.6 634.6L420.2 634.8L420.8 635.0L421.4 635.2L422.0 635.2L422.6 635.2L423.2 635.1L423.8 634.9L424.4 634.6L425.0 634.3L425.6 634.1L426.2 634.0L426.8 634.1L427.4 634.2L428.0 634.3L428.6 634.4L429.2 634.6L429.8 634.8L430.4 635.0L431.0 635.4L431.6 635.8L432.2 636.1L432.8 636.4L433.4 636.6L434.0 636.7L434.6 636.7L435.2 636.8L435.8 636.8L436.4 636.9L437.0 636.9L437.6 636.9L438.2 636.9L438.8 636.9L439.4 637.0L440.0 637.0L440.6 637.0L441.2 637.0L441.8 637.0L442.4 637.0L443.0 637.0L443.6 637.0L444.2 637.0L444.8 636.9L445.4 636.9L446.0 636.6L446.6 636.3L447.2 635.8L447.8 634.7L448.4 633.5L449.0 632.3L449.6 631.3L450.2 630.5L450.8 629.8L451.4 629.2L452.0 628.7L452.6 628.2L453.2 628.1L453.8 628.2L454.4 628.7L455.0 629.5L455.6 630.4L456.2 631.3L456.8 632.0L457.4 632.4L458.0 632.8L458.6 633.2L459.2 633.6L459.8 633.9L460.4 634.1L461.0 634.3L461.6 634.4L462.2 634.5L462.8 634.6L463.4 634.6L464.0 634.7L464.6 634.7L465.2 634.8L465.8 634.9L466.4 634.9L467.0 634.9L467.6 634.7L468.2 634.5L468.8 634.3L469.4 634.0L470.0 633.8L470.6 633.6L471.2 633.4L471.8 633.3L472.4 633.2L473.0 633.2L473.6 633.3L474.2 633.4L474.8 633.6L475.4 633.8L476.0 634.1L476.6 634.3L477.2 634.5L477.8 634.6L478.4 634.7L479.0 634.7L479.6 634.8L480.2 634.8L480.8 634.7L481.4 634.7L482.0 634.7L482.6 634.7L483.2 634.7L483.8 634.8L484.4 634.9L485.0 635.0L485.6 635.0L486.2 635.1L486.8 635.2L487.4 635.2L488.0 635.3L488.6 635.4L489.2 635.4L489.8 635.4L490.4 635.4L491.0 635.3L491.6 635.2L492.2 635.2L492.8 635.2L493.4 635.1L494.0 635.1L494.6 635.1L495.2 635.0L495.8 635.0L496.4 635.0L497.0 635.0L497.6 635.0L498.2 634.9L498.8 634.9L499.4 634.9L500.0 635.0L500.6 635.1L501.2 635.2L501.8 635.3L502.4 635.5L503.0 635.7L503.6 635.8L504.2 636.0L504.8 636.2L505.4 636.4L506.0 636.6L506.6 636.7L507.2 636.8L507.8 636.8L508.4 636.8L509.0 636.9L509.6 636.9L510.2 636.9L510.8 636.9L511.4 636.9L512.0 636.9L512.6 636.9L513.2 636.9L513.8 636.9L514.4 636.9L515.0 636.9L515.6 637.0L516.2 636.9L516.8 636.9L517.4 636.8L518.0 636.7L518.6 636.4L519.2 636.0L519.8 635.5L520.4 635.0L521.0 634.4L521.6 633.9L522.2 633.3L522.8 632.7L523.4 632.2L524.0 631.8L524.6 631.6L525.2 631.7L525.8 631.9L526.4 632.2L527.0 632.6L527.6 633.0L528.2 633.3L528.8 633.7L529.4 634.1L530.0 634.5L530.6 634.7L531.2 634.8L531.8 634.9L532.4 634.8L533.0 634.7L533.6 634.5L534.2 634.4L534.8 634.4L535.4 634.4L536.0 634.4L536.6 634.5L537.2 634.5L537.8 634.5L538.4 634.5L539.0 634.5L539.6 634.6L540.2 634.6L540.8 634.7L541.4 634.7L542.0 634.7L542.6 634.8L543.2 634.9L543.8 635.0L544.4 635.2L545.0 635.4L545.6 635.6L546.2 635.8L546.8 636.1L547.4 636.3L548.0 636.5L548.6 636.7L548.6 637.7L548.0 637.9L547.4 638.1L546.8 638.3L546.2 638.6L545.6 638.8L545.0 639.0L544.4 639.2L543.8 639.4L543.2 639.5L542.6 639.6L542.0 639.7L541.4 639.7L540.8 639.7L540.2 639.8L539.6 639.8L539.0 639.9L538.4 639.9L537.8 639.9L537.2 639.9L536.6 639.9L536.0 640.0L535.4 640.0L534.8 640.0L534.2 640.0L533.6 639.9L533.0 639.7L532.4 639.6L531.8 639.5L531.2 639.6L530.6 639.7L530.0 639.9L529.4 640.3L528.8 640.7L528.2 641.1L527.6 641.4L527.0 641.8L526.4 642.2L525.8 642.5L525.2 642.7L524.6 642.8L524.0 642.6L523.4 642.2L522.8 641.7L522.2 641.1L521.6 640.5L521.0 640.0L520.4 639.4L519.8 638.9L519.2 638.4L518.6 638.0L518.0 637.7L517.4 637.6L516.8 637.5L516.2 637.5L515.6 637.4L515.0 637.5L514.4 637.5L513.8 637.5L513.2 637.5L512.6 637.5L512.0 637.5L511.4 637.5L510.8 637.5L510.2 637.5L509.6 637.5L509.0 637.5L508.4 637.6L507.8 637.6L507.2 637.6L506.6 637.7L506.0 637.8L505.4 638.0L504.8 638.2L504.2 638.4L503.6 638.6L503.0 638.7L502.4 638.9L501.8 639.1L501.2 639.2L500.6 639.3L500.0 639.4L499.4 639.5L498.8 639.5L498.2 639.5L497.6 639.4L497.0 639.4L496.4 639.4L495.8 639.4L495.2 639.4L494.6 639.3L494.0 639.3L493.4 639.3L492.8 639.2L492.2 639.2L491.6 639.2L491.0 639.1L490.4 639.0L489.8 639.0L489.2 639.0L488.6 639.0L488.0 639.1L487.4 639.2L486.8 639.2L486.2 639.3L485.6 639.4L485.0 639.4L484.4 639.5L483.8 639.6L483.2 639.7L482.6 639.7L482.0 639.7L481.4 639.7L480.8 639.7L480.2 639.6L479.6 639.6L479.0 639.7L478.4 639.7L477.8 639.8L477.2 639.9L476.6 640.1L476.0 640.3L475.4 640.6L474.8 640.8L474.2 641.0L473.6 641.1L473.0 641.2L472.4 641.2L471.8 641.1L471.2 641.0L470.6 640.8L470.0 640.6L469.4 640.4L468.8 640.1L468.2 639.9L467.6 639.7L467.0 639.5L466.4 639.5L465.8 639.5L465.2 639.6L464.6 639.7L464.0 639.7L463.4 639.8L462.8 639.8L462.2 639.9L461.6 640.0L461.0 640.1L460.4 640.3L459.8 640.5L459.2 640.8L458.6 641.2L458.0 641.6L457.4 642.0L456.8 642.4L456.2 643.1L455.6 644.0L455.0 644.9L454.4 645.7L453.8 646.2L453.2 646.3L452.6 646.2L452.0 645.7L451.4 645.2L450.8 644.6L450.2 643.9L449.6 643.1L449.0 642.1L448.4 640.9L447.8 639.7L447.2 638.6L446.6 638.1L446.0 637.8L445.4 637.5L444.8 637.5L444.2 637.4L443.6 637.4L443.0 637.4L442.4 637.4L441.8 637.4L441.2 637.4L440.6 637.4L440.0 637.4L439.4 637.4L438.8 637.5L438.2 637.5L437.6 637.5L437.0 637.5L436.4 637.5L435.8 637.6L435.2 637.6L434.6 637.7L434.0 637.7L433.4 637.8L432.8 638.0L432.2 638.3L431.6 638.6L431.0 639.0L430.4 639.4L429.8 639.6L429.2 639.8L428.6 640.0L428.0 640.1L427.4 640.2L426.8 640.3L426.2 640.4L425.6 640.3L425.0 640.1L424.4 639.8L423.8 639.5L423.2 639.3L422.6 639.2L422.0 639.2L421.4 639.2L420.8 639.4L420.2 639.6L419.6 639.8L419.0 640.0L418.4 640.2L417.8 640.3L417.2 640.4L416.6 640.5L416.0 640.6L415.4 640.8L414.8 640.9L414.2 641.0L413.6 640.8L413.0 640.7L412.4 640.6L411.8 640.6L411.2 640.6L410.6 640.6L410.0 640.6L409.4 640.7L408.8 640.7L408.2 640.7L407.6 640.8L407.0 640.9L406.4 640.9L405.8 640.9L405.2 640.7L404.6 640.5L404.0 640.2L403.4 639.9L402.8 639.6L402.2 639.4L401.6 639.0L401.0 638.6L400.4 638.2L399.8 637.8L399.2 637.6L398.6 637.5L398.0 637.5L397.4 637.5L396.8 637.5L396.2 637.5L395.6 637.5L395.0 637.5L394.4 637.5L393.8 637.5L393.2 637.5L392.6 637.5L392.0 637.5L391.4 637.5L390.8 637.5L390.2 637.5L389.6 637.6L389.0 637.6L388.4 637.6L387.8 637.6L387.2 637.6L386.6 637.7L386.0 637.7L385.4 637.7L384.8 637.7L384.2 637.8L383.6 637.8L383.0 637.8L382.4 637.9L381.8 637.9L381.2 637.9L380.6 637.9L380.0 638.0L379.4 638.0L378.8 638.0L378.2 638.1L377.6 638.3L377.0 638.4L376.4 638.6L375.8 638.7L375.2 638.8L374.6 638.9L374.0 639.1L373.4 639.2L372.8 639.3L372.2 639.4L371.6 639.4L371.0 639.4L370.4 639.3L369.8 639.3L369.2 639.3L368.6 639.4L368.0 639.4L367.4 639.4L366.8 639.5L366.2 639.5L365.6 639.5L365.0 639.6L364.4 639.6L363.8 639.6L363.2 639.7L362.6 639.7L362.0 639.8L361.4 639.9L360.8 640.0L360.2 640.1L359.6 640.2L359.0 640.3L358.4 640.4L357.8 640.6L357.2 640.8L356.6 641.0L356.0 641.3L355.4 641.4L354.8 641.4L354.2 641.4L353.6 641.3L353.0 641.2L352.4 641.1L351.8 640.8L351.2 640.6L350.6 640.4L350.0 640.1L349.4 639.7L348.8 639.5L348.2 639.3L347.6 639.3L347.0 639.3L346.4 639.4L345.8 639.6L345.2 639.8L344.6 640.1L344.0 640.4L343.4 640.7L342.8 640.9L342.2 641.1L341.6 641.2L341.0 641.2L340.4 641.2L339.8 641.2L339.2 641.2L338.6 641.3L338.0 641.6L337.4 642.1L336.8 642.9L336.2 643.8L335.6 645.0L335.0 646.3L334.4 647.6L333.8 648.7L333.2 649.4L332.6 649.7L332.0 649.8L331.4 649.4L330.8 648.6L330.2 647.6L329.6 646.3L329.0 644.8L328.4 643.2L327.8 641.6L327.2 640.3L326.6 639.3L326.0 638.5L325.4 638.1L324.8 637.8L324.2 637.7L323.6 637.7L323.0 637.6L322.4 637.6L321.8 637.6L321.2 637.6L320.6 637.6L320.0 637.7L319.4 637.7L318.8 637.7L318.2 637.7L317.6 637.8L317.0 637.8L316.4 637.8L315.8 637.9L315.2 637.9L314.6 638.0L314.0 638.1L313.4 638.2L312.8 638.3L312.2 638.5L311.6 638.8L311.0 639.1L310.4 639.4L309.8 639.7L309.2 639.9L308.6 640.1L308.0 640.3L307.4 640.4L306.8 640.5L306.2 640.6L305.6 640.6L305.0 640.5L304.4 640.4L303.8 640.3L303.2 640.3L302.6 640.3L302.0 640.4L301.4 640.4L300.8 640.5L300.2 640.5L299.6 640.5L299.0 640.5L298.4 640.5L297.8 640.4L297.2 640.3L296.6 640.2L296.0 640.1L295.4 640.0L294.8 640.0L294.2 640.0L293.6 640.0L293.0 640.1L292.4 640.1L291.8 640.2L291.2 640.2L290.6 640.2L290.0 640.2L289.4 640.2L288.8 640.2L288.2 640.1L287.6 640.1L287.0 640.1L286.4 640.1L285.8 640.1L285.2 640.2L284.6 640.3L284.0 640.4L283.4 640.6L282.8 640.8L282.2 641.0L281.6 641.2L281.0 641.4L280.4 641.5L279.8 641.5L279.2 641.5L278.6 641.5L278.0 641.4L277.4 641.3L276.8 641.1L276.2 640.9L275.6 640.7L275.0 640.4L274.4 640.1L273.8 639.9L273.2 639.7L272.6 639.6L272.0 639.5L271.4 639.4L270.8 639.4L270.2 639.4L269.6 639.4L269.0 639.4L268.4 639.6L267.8 639.8L267.2 640.0L266.6 640.2L266.0 640.4L265.4 640.6L264.8 640.7L264.2 640.8L263.6 640.9L263.0 640.9L262.4 640.9L261.8 641.0L261.2 641.0L260.6 641.1L260.0 641.2L259.4 641.1L258.8 640.9L258.2 640.7L257.6 640.4L257.0 640.1L256.4 639.8L255.8 639.6L255.2 639.3L254.6 637.5zM643.6 636.9L644.2 634.9L644.8 634.4L645.4 634.1L646.0 633.7L646.6 633.3L647.2 632.9L647.8 632.6L648.4 632.5L649.0 632.6L649.6 632.8L650.2 633.1L650.8 633.4L651.4 633.6L652.0 633.5L652.6 633.3L653.2 633.2L653.8 633.2L654.4 633.3L655.0 633.4L655.6 633.4L656.2 633.4L656.8 633.5L657.4 633.5L658.0 633.6L658.6 633.7L659.2 634.1L659.8 634.5L660.4 634.8L661.0 634.9L661.6 635.0L662.2 635.1L662.8 635.1L663.4 635.0L664.0 634.9L664.6 634.7L665.2 634.3L665.8 633.8L666.4 633.3L667.0 632.8L667.6 632.4L668.2 631.9L668.8 631.5L669.4 631.1L670.0 630.9L670.6 630.9L671.2 631.0L671.8 631.2L672.4 631.6L673.0 632.0L673.6 632.3L674.2 632.5L674.8 632.8L675.4 633.2L676.0 633.4L676.6 633.7L677.2 633.8L677.8 633.9L678.4 633.9L679.0 633.9L679.6 633.8L680.2 633.8L680.8 633.9L681.4 634.0L682.0 634.1L682.6 634.1L683.2 634.1L683.8 634.0L684.4 634.0L685.0 634.0L685.6 634.1L686.2 634.2L686.8 634.3L687.4 634.4L688.0 634.4L688.6 634.4L689.2 634.3L689.8 634.3L690.4 634.2L691.0 634.2L691.6 634.3L692.2 634.4L692.8 634.5L693.4 634.5L694.0 634.6L694.6 634.5L695.2 634.5L695.8 634.6L696.4 634.7L697.0 634.8L697.6 635.0L698.2 635.1L698.8 635.2L699.4 635.3L700.0 635.4L700.6 635.6L701.2 635.7L701.8 635.8L702.4 636.0L703.0 636.1L703.6 636.2L704.2 636.3L704.8 636.4L705.4 636.4L706.0 636.5L706.6 636.5L707.2 636.5L707.8 636.6L708.4 636.6L709.0 636.6L709.6 636.7L710.2 636.7L710.8 636.7L711.4 636.7L712.0 636.8L712.6 636.7L713.2 636.6L713.8 636.4L714.4 635.8L715.0 635.6L715.6 633.7L716.2 632.8L716.8 632.0L717.4 631.5L718.0 630.8L718.6 630.2L719.2 629.6L719.8 628.7L720.4 627.8L721.0 626.8L721.6 626.6L722.2 627.1L722.8 627.8L723.4 628.3L724.0 628.4L724.6 628.7L725.2 629.2L725.8 629.7L726.4 630.3L727.0 631.1L727.6 632.1L728.2 632.9L728.8 633.4L729.4 633.6L730.0 633.8L730.6 633.9L731.2 633.9L731.8 633.9L732.4 634.0L733.0 634.1L733.6 634.3L734.2 634.5L734.8 634.7L735.4 634.8L736.0 635.0L736.6 635.0L737.2 634.9L737.8 634.7L738.4 634.2L739.0 633.8L739.6 633.4L740.2 633.0L740.8 632.6L741.4 632.3L742.0 632.1L742.6 631.9L743.2 631.8L743.8 632.0L744.4 632.2L745.0 632.6L745.6 633.0L746.2 633.4L746.8 633.6L747.4 633.9L748.0 634.1L748.6 634.2L749.2 634.3L749.8 634.4L750.4 634.5L751.0 634.5L751.6 634.4L752.2 634.5L752.8 634.5L753.4 634.6L754.0 634.7L754.6 634.7L755.2 634.8L755.8 634.8L756.4 634.8L757.0 634.8L757.6 634.8L758.2 634.9L758.8 635.0L759.4 635.0L760.0 635.0L760.6 635.0L761.2 634.9L761.8 634.9L762.4 634.9L763.0 634.9L763.6 635.0L764.2 635.1L764.8 635.1L765.4 635.2L766.0 635.3L766.6 635.4L767.2 635.5L767.8 635.6L768.4 635.8L769.0 635.9L769.6 636.0L770.2 636.1L770.8 636.1L771.4 636.2L772.0 636.2L772.6 636.3L773.2 636.3L773.8 636.4L774.4 636.4L775.0 636.5L775.6 636.5L776.2 636.5L776.8 636.6L777.4 636.6L778.0 636.6L778.6 636.7L779.2 636.7L779.8 636.7L780.4 636.7L781.0 636.7L781.6 636.8L782.2 636.8L782.8 636.8L783.4 636.8L784.0 636.8L784.6 636.8L785.2 636.8L785.8 636.8L786.4 636.8L787.0 636.7L787.6 636.6L788.2 636.2L788.8 635.6L789.4 634.8L790.0 634.2L790.6 633.6L791.2 633.1L791.8 632.6L792.4 632.3L793.0 632.0L793.6 631.7L794.2 631.4L794.8 631.4L795.4 631.6L796.0 632.1L796.6 632.5L797.2 632.9L797.8 633.2L798.4 633.4L799.0 633.5L799.6 633.6L800.2 633.7L800.8 633.8L801.4 633.9L802.0 634.0L802.6 634.1L803.2 634.0L803.8 633.9L804.4 633.6L805.0 633.4L805.6 633.3L806.2 633.3L806.8 633.4L807.4 633.5L808.0 633.5L808.6 633.6L809.2 633.7L809.8 633.8L810.4 633.9L811.0 634.1L811.6 634.4L812.2 634.6L812.8 634.8L813.4 634.9L814.0 635.0L814.6 635.1L815.2 635.2L815.8 635.4L816.4 635.6L817.0 635.8L817.6 636.0L818.2 636.2L818.8 636.4L819.4 636.5L820.0 636.6L820.6 636.7L821.2 636.7L821.8 636.8L822.4 636.8L823.0 636.9L823.6 636.9L824.2 636.9L824.8 636.9L825.4 636.9L826.0 636.9L826.6 636.9L827.2 636.9L827.8 636.9L828.4 636.9L829.0 636.9L829.6 636.9L830.2 636.9L830.8 636.9L831.4 636.9L832.0 636.9L832.6 636.9L833.2 636.9L833.8 636.9L834.4 636.8L835.0 636.7L835.6 636.4L836.2 636.1L836.8 635.9L837.4 634.7L838.0 633.7L838.6 632.6L839.2 631.7L839.8 630.9L840.4 630.2L841.0 629.6L841.6 629.2L842.2 629.1L842.8 629.1L843.4 629.4L844.0 629.8L844.6 630.3L845.2 631.2L845.8 631.9L846.4 632.6L847.0 633.1L847.6 633.4L848.2 633.7L848.8 633.9L849.4 633.9L850.0 634.0L850.6 634.1L851.2 634.1L851.8 634.2L852.4 634.3L853.0 634.4L853.6 634.5L854.2 634.6L854.8 634.7L855.4 634.8L856.0 634.9L856.6 635.0L857.2 635.0L857.8 634.9L858.4 634.8L859.0 634.5L859.6 634.3L860.2 634.1L860.8 633.8L861.4 633.6L862.0 633.4L862.6 633.3L863.2 633.2L863.8 633.2L864.4 633.2L865.0 633.4L865.6 633.6L866.2 633.9L866.8 634.1L867.4 634.4L868.0 634.7L868.6 634.9L869.2 635.0L869.8 635.1L870.4 635.2L871.0 635.2L871.6 635.2L872.2 635.1L872.8 635.0L873.4 634.9L874.0 634.9L874.6 634.9L875.2 634.9L875.8 634.9L876.4 634.9L877.0 634.9L877.6 635.0L878.2 635.1L878.8 635.2L879.4 635.4L880.0 635.5L880.6 635.6L881.2 635.6L881.8 635.6L882.4 635.6L883.0 635.6L883.6 635.6L884.2 635.6L884.8 635.6L885.4 635.5L886.0 635.5L886.6 635.5L887.2 635.5L887.8 635.5L888.4 635.5L889.0 635.4L889.6 635.3L890.2 635.3L890.8 635.3L891.4 635.4L892.0 635.4L892.6 635.5L893.2 635.6L893.8 635.7L894.4 635.8L895.0 636.0L895.6 636.1L896.2 636.4L896.8 636.6L897.4 636.7L898.0 636.8L898.6 636.9L899.2 636.9L899.8 636.9L900.4 636.9L901.0 636.9L901.6 636.9L902.2 636.9L902.8 636.9L903.4 636.9L904.0 636.9L904.6 636.9L905.2 636.9L905.8 636.9L906.4 636.8L907.0 636.6L907.6 636.3L908.2 636.0L908.8 635.7L909.4 635.2L910.0 634.8L910.6 634.5L911.2 634.2L911.8 633.9L912.4 633.5L913.0 633.2L913.6 633.0L914.2 632.8L914.8 632.8L915.4 632.9L916.0 633.0L916.6 633.1L917.2 633.3L917.8 633.4L918.4 633.6L919.0 633.7L919.6 634.0L920.2 634.2L920.8 634.4L921.4 634.6L922.0 634.7L922.6 634.8L923.2 634.9L923.8 635.0L924.4 635.0L925.0 635.1L925.6 635.1L926.2 635.1L926.8 635.1L927.4 635.2L928.0 635.2L928.6 635.2L929.2 635.2L929.8 635.3L930.4 635.2L931.0 635.1L931.6 635.0L932.2 635.0L932.8 635.0L933.4 635.1L934.0 635.2L934.6 635.3L935.2 635.5L935.8 635.6L936.4 635.8L937.0 636.0L937.6 636.2L938.2 636.4L938.8 636.6L939.4 636.7L940.0 636.8L940.6 636.8L941.2 636.8L941.8 636.9L942.4 636.9L943.0 636.9L943.6 636.9L944.2 636.9L944.8 636.9L945.4 636.9L946.0 636.9L946.6 636.9L947.2 636.9L947.8 636.9L948.4 636.9L949.0 636.9L949.6 637.0L950.2 637.0L950.8 637.0L951.4 637.0L952.0 637.0L952.6 637.0L953.2 637.0L953.8 637.0L954.4 637.0L955.0 637.0L955.6 637.0L956.2 637.0L956.8 637.0L956.8 637.4L956.2 637.4L955.6 637.4L955.0 637.4L954.4 637.4L953.8 637.4L953.2 637.4L952.6 637.4L952.0 637.4L951.4 637.4L950.8 637.4L950.2 637.4L949.6 637.4L949.0 637.5L948.4 637.5L947.8 637.5L947.2 637.5L946.6 637.5L946.0 637.5L945.4 637.5L944.8 637.5L944.2 637.5L943.6 637.5L943.0 637.5L942.4 637.5L941.8 637.5L941.2 637.6L940.6 637.6L940.0 637.6L939.4 637.7L938.8 637.8L938.2 638.0L937.6 638.2L937.0 638.4L936.4 638.6L935.8 638.8L935.2 638.9L934.6 639.1L934.0 639.2L933.4 639.3L932.8 639.4L932.2 639.4L931.6 639.4L931.0 639.3L930.4 639.2L929.8 639.1L929.2 639.2L928.6 639.2L928.0 639.2L927.4 639.2L926.8 639.3L926.2 639.3L925.6 639.3L925.0 639.3L924.4 639.4L923.8 639.4L923.2 639.5L922.6 639.6L922.0 639.7L921.4 639.8L920.8 640.0L920.2 640.2L919.6 640.4L919.0 640.7L918.4 640.8L917.8 641.0L917.2 641.1L916.6 641.3L916.0 641.4L915.4 641.5L914.8 641.6L914.2 641.6L913.6 641.4L913.0 641.2L912.4 640.9L911.8 640.5L911.2 640.2L910.6 639.9L910.0 639.6L909.4 639.2L908.8 638.7L908.2 638.4L907.6 638.1L907.0 637.8L906.4 637.6L905.8 637.5L905.2 637.5L904.6 637.5L904.0 637.5L903.4 637.5L902.8 637.5L902.2 637.5L901.6 637.5L901.0 637.5L900.4 637.5L899.8 637.5L899.2 637.5L898.6 637.5L898.0 637.6L897.4 637.7L896.8 637.8L896.2 638.0L895.6 638.3L895.0 638.4L894.4 638.6L893.8 638.7L893.2 638.8L892.6 638.9L892.0 639.0L891.4 639.0L890.8 639.1L890.2 639.1L889.6 639.1L889.0 639.0L888.4 638.9L887.8 638.9L887.2 638.9L886.6 638.9L886.0 638.9L885.4 638.9L884.8 638.8L884.2 638.8L883.6 638.8L883.0 638.8L882.4 638.8L881.8 638.8L881.2 638.8L880.6 638.8L880.0 638.9L879.4 639.0L878.8 639.2L878.2 639.3L877.6 639.4L877.0 639.5L876.4 639.5L875.8 639.5L875.2 639.5L874.6 639.5L874.0 639.5L873.4 639.5L872.8 639.4L872.2 639.3L871.6 639.2L871.0 639.2L870.4 639.2L869.8 639.3L869.2 639.4L868.6 639.5L868.0 639.7L867.4 640.0L866.8 640.3L866.2 640.5L865.6 640.8L865.0 641.0L864.4 641.2L863.8 641.2L863.2 641.2L862.6 641.1L862.0 641.0L861.4 640.8L860.8 640.6L860.2 640.3L859.6 640.1L859.0 639.9L858.4 639.6L857.8 639.5L857.2 639.4L856.6 639.4L856.0 639.5L855.4 639.6L854.8 639.7L854.2 639.8L853.6 639.9L853.0 640.0L852.4 640.1L851.8 640.2L851.2 640.3L850.6 640.3L850.0 640.4L849.4 640.5L848.8 640.5L848.2 640.7L847.6 641.0L847.0 641.3L846.4 641.8L845.8 642.5L845.2 643.2L844.6 644.1L844.0 644.6L843.4 645.0L842.8 645.3L842.2 645.3L841.6 645.2L841.0 644.8L840.4 644.2L839.8 643.5L839.2 642.7L838.6 641.8L838.0 640.7L837.4 639.7L836.8 638.5L836.2 638.3L835.6 638.0L835.0 637.7L834.4 637.6L833.8 637.5L833.2 637.5L832.6 637.5L832.0 637.5L831.4 637.5L830.8 637.5L830.2 637.5L829.6 637.5L829.0 637.5L828.4 637.5L827.8 637.5L827.2 637.5L826.6 637.5L826.0 637.5L825.4 637.5L824.8 637.5L824.2 637.5L823.6 637.5L823.0 637.5L822.4 637.6L821.8 637.6L821.2 637.7L820.6 637.7L820.0 637.8L819.4 637.9L818.8 638.0L818.2 638.2L817.6 638.4L817.0 638.6L816.4 638.8L815.8 639.0L815.2 639.2L814.6 639.3L814.0 639.4L813.4 639.5L812.8 639.6L812.2 639.8L811.6 640.0L811.0 640.3L810.4 640.5L809.8 640.6L809.2 640.7L808.6 640.8L808.0 640.9L807.4 640.9L806.8 641.0L806.2 641.1L805.6 641.1L805.0 641.0L804.4 640.8L803.8 640.5L803.2 640.4L802.6 640.3L802.0 640.4L801.4 640.5L800.8 640.6L800.2 640.7L799.6 640.8L799.0 640.9L798.4 641.0L797.8 641.2L797.2 641.5L796.6 641.9L796.0 642.3L795.4 642.8L794.8 643.0L794.2 643.0L793.6 642.7L793.0 642.4L792.4 642.1L791.8 641.8L791.2 641.3L790.6 640.8L790.0 640.2L789.4 639.6L788.8 638.8L788.2 638.2L787.6 637.8L787.0 637.7L786.4 637.6L785.8 637.6L785.2 637.6L784.6 637.6L784.0 637.6L783.4 637.6L782.8 637.6L782.2 637.6L781.6 637.6L781.0 637.7L780.4 637.7L779.8 637.7L779.2 637.7L778.6 637.7L778.0 637.8L777.4 637.8L776.8 637.8L776.2 637.9L775.6 637.9L775.0 637.9L774.4 638.0L773.8 638.0L773.2 638.1L772.6 638.1L772.0 638.2L771.4 638.2L770.8 638.3L770.2 638.3L769.6 638.4L769.0 638.5L768.4 638.6L767.8 638.8L767.2 638.9L766.6 639.0L766.0 639.1L765.4 639.2L764.8 639.3L764.2 639.3L763.6 639.4L763.0 639.5L762.4 639.5L761.8 639.5L761.2 639.5L760.6 639.4L760.0 639.4L759.4 639.4L758.8 639.4L758.2 639.5L757.6 639.6L757.0 639.6L756.4 639.6L755.8 639.6L755.2 639.6L754.6 639.7L754.0 639.7L753.4 639.8L752.8 639.9L752.2 639.9L751.6 640.0L751.0 639.9L750.4 639.9L749.8 640.0L749.2 640.1L748.6 640.2L748.0 640.3L747.4 640.5L746.8 640.8L746.2 641.0L745.6 641.4L745.0 641.8L744.4 642.2L743.8 642.4L743.2 642.6L742.6 642.5L742.0 642.3L741.4 642.1L740.8 641.8L740.2 641.4L739.6 641.0L739.0 640.6L738.4 640.2L737.8 639.7L737.2 639.5L736.6 639.4L736.0 639.4L735.4 639.6L734.8 639.7L734.2 639.9L733.6 640.1L733.0 640.3L732.4 640.4L731.8 640.5L731.2 640.5L730.6 640.5L730.0 640.6L729.4 640.8L728.8 641.0L728.2 641.5L727.6 642.3L727.0 643.3L726.4 644.1L725.8 644.7L725.2 645.2L724.6 645.7L724.0 646.0L723.4 646.1L722.8 646.6L722.2 647.3L721.6 647.8L721.0 647.6L720.4 646.6L719.8 645.7L719.2 644.8L718.6 644.2L718.0 643.6L717.4 642.9L716.8 642.4L716.2 641.6L715.6 640.7L715.0 638.8L714.4 638.6L713.8 638.0L713.2 637.8L712.6 637.7L712.0 637.6L711.4 637.7L710.8 637.7L710.2 637.7L709.6 637.7L709.0 637.8L708.4 637.8L707.8 637.8L707.2 637.9L706.6 637.9L706.0 637.9L705.4 638.0L704.8 638.0L704.2 638.1L703.6 638.2L703.0 638.3L702.4 638.4L701.8 638.6L701.2 638.7L700.6 638.8L700.0 639.0L699.4 639.1L698.8 639.2L698.2 639.3L697.6 639.4L697.0 639.6L696.4 639.7L695.8 639.8L695.2 639.9L694.6 639.9L694.0 639.8L693.4 639.9L692.8 639.9L692.2 640.0L691.6 640.1L691.0 640.2L690.4 640.2L689.8 640.1L689.2 640.1L688.6 640.0L688.0 640.0L687.4 640.0L686.8 640.1L686.2 640.2L685.6 640.3L685.0 640.4L684.4 640.4L683.8 640.4L683.2 640.3L682.6 640.3L682.0 640.3L681.4 640.4L680.8 640.5L680.2 640.6L679.6 640.6L679.0 640.5L678.4 640.5L677.8 640.5L677.2 640.6L676.6 640.7L676.0 641.0L675.4 641.2L674.8 641.6L674.2 641.9L673.6 642.1L673.0 642.4L672.4 642.8L671.8 643.2L671.2 643.4L670.6 643.5L670.0 643.5L669.4 643.3L668.8 642.9L668.2 642.5L667.6 642.0L667.0 641.6L666.4 641.1L665.8 640.6L665.2 640.1L664.6 639.7L664.0 639.5L663.4 639.4L662.8 639.3L662.2 639.3L661.6 639.4L661.0 639.5L660.4 639.6L659.8 639.9L659.2 640.3L658.6 640.7L658.0 640.8L657.4 640.9L656.8 640.9L656.2 641.0L655.6 641.0L655.0 641.0L654.4 641.1L653.8 641.2L653.2 641.2L652.6 641.1L652.0 640.9L651.4 640.8L650.8 641.0L650.2 641.3L649.6 641.6L649.0 641.8L648.4 641.9L647.8 641.8L647.2 641.5L646.6 641.1L646.0 640.7L645.4 640.3L644.8 640.0L644.2 639.5L643.6 637.5z" fill="#aef3fc"/>
</svg>

<div class="a" style="left:142px;top:11px;width:261px;height:37px;line-height:37.6px;text-align:center;font-size:15.1px;color:#e4e4e4">Berlin Techno</div>
<div class="a" style="left:445px;top:11px;line-height:37.4px;font-size:15.3px;color:#e4e4e4">125</div>
<div class="tab" style="left:575px;width:59px;color:#f2f2f2">LOOP</div>
<div class="tab" style="left:634px;width:58px">SEQ</div>
<div class="tab" style="left:692px;width:60px">DRUM</div>
<div class="tab" style="left:752px;width:58px">SONG</div>
<div class="a" style="left:856.500px;top:11.6px;line-height:37px;font-size:10.6px;font-weight:bold;color:#fff;letter-spacing:-.2px">REC</div>
<div class="cell" style="left:61.00px;top:83px;color:#ea6562">Kick<br>Beast</div>
<div class="cell" style="left:61.00px;top:141px;color:#ea6562">Kick<br>Satellite</div>
<div class="cell" style="left:61.00px;top:198px;color:#ea6562">Kick<br>Safari</div>
<div class="cell" style="left:61.00px;top:256px;color:#ea6562">Kick<br>Industry</div>
<div class="cell" style="left:61.00px;top:313px;color:#6b3637">Kick<br>Night</div>
<div class="cell" style="left:61.00px;top:371px;color:#ea6562">Kick<br>Steal</div>
<div class="cell" style="left:179.50px;top:83px;color:#f0956b">Top<br>Beast</div>
<div class="cell" style="left:179.50px;top:141px;color:#f0956b">Top<br>Satellite</div>
<div class="cell" style="left:179.50px;top:198px;color:#f0956b">Top<br>Safari</div>
<div class="cell" style="left:179.50px;top:256px;color:#f0956b">Top<br>Industry</div>
<div class="cell" style="left:179.50px;top:313px;color:#744d3b">Top<br>Night</div>
<div class="cell" style="left:179.50px;top:371px;color:#f0956b">Top<br>Steal</div>
<div class="cell" style="left:298.00px;top:83px;color:#f2d777">Perc<br>Beast</div>
<div class="cell" style="left:298.00px;top:141px;color:#f2d777">Perc<br>Satellite</div>
<div class="cell" style="left:298.00px;top:198px;color:#f2d777">Perc<br>Safari</div>
<div class="cell" style="left:298.00px;top:256px;color:#f2d777">Perc<br>Industry</div>
<div class="cell" style="left:298.00px;top:313px;color:#746a45">Perc<br>Night</div>
<div class="cell" style="left:298.00px;top:371px;color:#f2d777">Perc<br>Steal</div>
<div class="cell" style="left:416.50px;top:83px;color:#84df80">Bass<br>Beast</div>
<div class="cell" style="left:416.50px;top:141px;color:#84df80">Bass<br>Satellite</div>
<div class="cell" style="left:416.50px;top:198px;color:#84df80">Bass<br>Safari</div>
<div class="cell" style="left:416.50px;top:256px;color:#84df80">Bass<br>Industry</div>
<div class="cell" style="left:416.50px;top:313px;color:#4a6c45">Bass<br>Night</div>
<div class="cell" style="left:416.50px;top:371px;color:#84df80">Bass<br>Steal</div>
<div class="cell" style="left:535.00px;top:83px;color:#6fdcec">Chords<br>Beast</div>
<div class="cell" style="left:535.00px;top:198px;color:#6fdcec">Chords<br>Safari</div>
<div class="cell" style="left:535.00px;top:256px;color:#6fdcec">Chords<br>Industry</div>
<div class="cell" style="left:535.00px;top:313px;color:#456a72">Chords<br>Night</div>
<div class="cell" style="left:535.00px;top:371px;color:#6fdcec">Chords<br>Steal</div>
<div class="cell" style="left:653.50px;top:83px;color:#ee8db2">Synth<br>Beast</div>
<div class="cell" style="left:653.50px;top:141px;color:#ee8db2">Synth<br>Satellite</div>
<div class="cell" style="left:653.50px;top:198px;color:#ee8db2">Synth<br>Safari</div>
<div class="cell" style="left:653.50px;top:256px;color:#ee8db2">Synth<br>Industry</div>
<div class="cell" style="left:653.50px;top:313px;color:#714a5a">Synth<br>Night</div>
<div class="cell" style="left:653.50px;top:371px;color:#ee8db2">Synth<br>Steal</div>
<div class="cell" style="left:772.00px;top:83px;color:#b290e0">FX1<br>Beast</div>
<div class="cell" style="left:772.00px;top:141px;color:#b290e0">FX1<br>Satellite</div>
<div class="cell" style="left:772.00px;top:198px;color:#b290e0">FX1<br>Safari</div>
<div class="cell" style="left:772.00px;top:256px;color:#b290e0">FX1<br>Industry</div>
<div class="cell" style="left:772.00px;top:313px;color:#b290e0">FX1<br>Night</div>
<div class="cell" style="left:772.00px;top:371px;color:#b290e0">FX1<br>Steal</div>
<div class="cell" style="left:890.50px;top:83px;color:#7ab3f0">FX2<br>Beast</div>
<div class="cell" style="left:890.50px;top:141px;color:#7ab3f0">FX2<br>Satellite</div>
<div class="cell" style="left:890.50px;top:198px;color:#7ab3f0">FX2<br>Safari</div>
<div class="cell" style="left:890.50px;top:256px;color:#7ab3f0">FX2<br>Industry</div>
<div class="cell" style="left:890.50px;top:313px;color:#7ab3f0">FX2<br>Night</div>
<div class="cell" style="left:890.50px;top:371px;color:#7ab3f0">FX2<br>Steal</div>
<div class="a" style="left:489.1px;top:120.2px;width:113.2px;height:16px;line-height:16px;text-align:center;font-size:9.9px;color:#3c3c3c;letter-spacing:0">Chords Satellite</div>
<div class="a" style="left:970px;top:477px;width:40.4px;height:40.4px;line-height:42.4px;text-align:center;font-size:18.4px;color:#d2d2d2;letter-spacing:-1.1px;text-indent:-1px;-webkit-text-stroke:.35px #d2d2d2">FX</div>
<div class="a" style="left:59.2px;top:429.400px;font-size:11.6px;line-height:14px;font-weight:bold;color:#fff;letter-spacing:-.2px;white-space:nowrap">Chords Satellite</div>
<div class="a" style="left:59.2px;top:444.600px;font-size:11px;line-height:14px;color:#686b70;letter-spacing:.3px;white-space:nowrap;-webkit-text-stroke:.25px #686b70">125 BPM - 8 BEATS</div>
<div class="a" style="left:873px;top:428px;width:77.400px;height:29.800px;line-height:31px;text-align:center;font-size:13px;color:#e2e2e2;letter-spacing:-.4px">UNLOAD</div>
<div class="a" style="left:29.500px;top:480px;width:117.800px;height:36.500px;line-height:37px;text-align:center;font-size:13.3px;color:#3a3d42;letter-spacing:-.45px">SNAP TO GRID</div>
<div class="a" style="left:28px;top:529.6px;width:120px;text-align:center;font-size:14.6px;line-height:18px;color:#f0f0f0">FADE IN</div>
<div class="a" style="left:58px;top:576.0px;width:60.400px;text-align:center;font-size:11.2px;line-height:15px;color:#595d62">0 ms</div>
<div class="a" style="left:28px;top:622px;width:120px;text-align:center;font-size:14.6px;line-height:18px;color:#f0f0f0">FADE OUT</div>
<div class="a" style="left:58px;top:668.5px;width:60.400px;text-align:center;font-size:11.2px;line-height:15px;color:#595d62">0 ms</div>
</div></body></html>
